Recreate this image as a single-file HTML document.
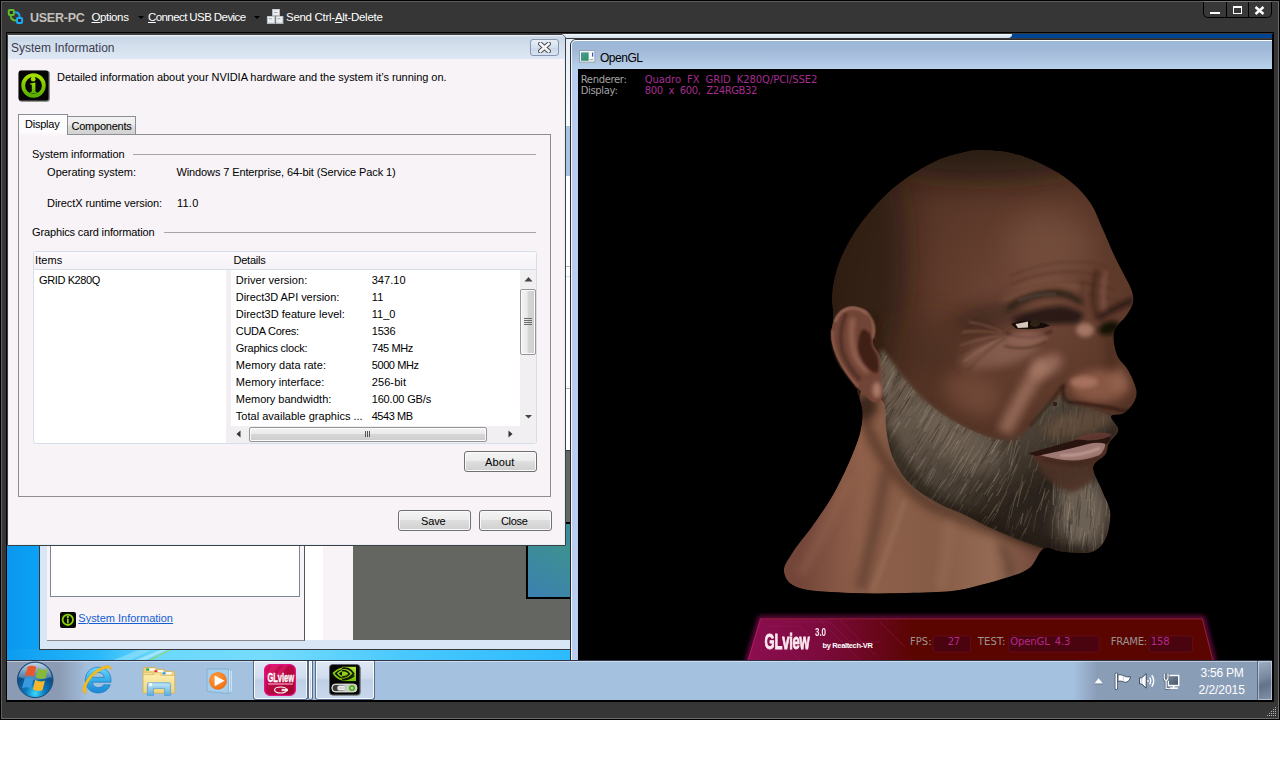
<!DOCTYPE html>
<html>
<head>
<meta charset="utf-8">
<title>USER-PC</title>
<style>
*{box-sizing:border-box;margin:0;padding:0}
html,body{width:1280px;height:768px;overflow:hidden;background:#fff}
body{font-family:"Liberation Sans",sans-serif;font-size:11px;color:#000;position:relative}
.a{position:absolute}
.t{position:absolute;white-space:nowrap}
u{text-decoration:underline}
#frame{position:absolute;left:0;top:0;width:1280px;height:720px;background:#363636;border:1px solid #000}
#desk{position:absolute;left:7px;top:34px;width:1265px;height:666px;overflow:hidden;background:#1c9cf0}
#in{position:absolute;left:-7px;top:-34px;width:1280px;height:768px}
.btn{position:absolute;border:1px solid #707070;border-radius:3px;background:linear-gradient(#f4f4f4 0,#ececec 46%,#dedede 50%,#d0d0d0 100%);box-shadow:inset 0 0 0 1px #fafafa}
.hr{position:absolute;height:1px;background:#a5a5a5}
</style>
</head>
<body>
<div id="frame"></div>
<div class="a" style="left:1px;top:1px;width:1278px;height:1px;background:#5e5e5e"></div><div class="a" style="left:1px;top:1px;width:1px;height:717px;background:#5e5e5e"></div><div class="a" style="left:1278px;top:1px;width:1px;height:718px;background:#6a6a6a"></div><div class="a" style="left:1px;top:718px;width:1278px;height:1px;background:#6a6a6a"></div><div class="a" style="left:6px;top:32px;width:1268px;height:670px;background:#000"></div><div class="a" style="left:7px;top:33px;width:1266px;height:1px;background:#3a3a3a"></div><svg class="a" style="left:6px;top:7px" width="20" height="20" viewBox="0 0 20 20">
<path d="M9 5.2 Q13.6 5.2 13.6 10" stroke="#18a4f0" stroke-width="2" fill="none"/>
<path d="M4.6 9 Q5.4 13.6 10 13.6" stroke="#5cb82c" stroke-width="2" fill="none"/>
<rect x="2.8" y="2.9" width="5.1" height="5.1" rx="1" fill="#2c2c2c" stroke="#62bc2c" stroke-width="2"/>
<rect x="11" y="10.9" width="5.1" height="5.1" rx="1" fill="#3a2c28" stroke="#18acf8" stroke-width="2"/>
</svg><span class="t" style="left:30.00px;top:10.07px;font-size:12.5px;line-height:16px;color:#c4c0bc;letter-spacing:-0.252px;font-weight:bold;">USER-PC</span><span class="t" style="left:91.50px;top:10.02px;font-size:11.5px;line-height:15px;color:#fff;letter-spacing:-0.377px;"><u>O</u>ptions</span><div class="a" style="left:138px;top:16px;width:0;height:0;border-left:3px solid transparent;border-right:3px solid transparent;border-top:3px solid #000"></div><span class="t" style="left:148.00px;top:10.02px;font-size:11.5px;line-height:15px;color:#fff;letter-spacing:-0.585px;"><u>C</u>onnect USB Device</span><div class="a" style="left:254px;top:16px;width:0;height:0;border-left:3px solid transparent;border-right:3px solid transparent;border-top:3px solid #000"></div><svg class="a" style="left:266px;top:8px" width="18" height="17" viewBox="0 0 18 17">
<rect x="6" y="1" width="8" height="7" fill="#b4b8bc"/><rect x="7" y="1.6" width="6" height="5.4" fill="#eceef0"/>
<rect x="0.9" y="8" width="8.4" height="8" fill="#b4b8bc"/><rect x="1.9" y="8.7" width="6.4" height="6" fill="#eceef0"/>
<rect x="9.6" y="8" width="7.8" height="8" fill="#b4b8bc"/><rect x="10.4" y="8.7" width="6" height="6" fill="#eceef0"/>
<rect x="8" y="4" width="3.4" height="1" fill="#a0a8b4"/><rect x="3" y="10.2" width="3" height="1" fill="#a0a8b4"/><rect x="11.4" y="10.2" width="3" height="1" fill="#a0a8b4"/>
</svg><span class="t" style="left:286.00px;top:10.02px;font-size:11.5px;line-height:15px;color:#fff;letter-spacing:-0.289px;">Send Ctrl-<u>A</u>lt-Delete</span><div class="a" style="left:1203px;top:2px;width:69px;height:16px;border:1px solid #000;border-top:none;border-radius:0 0 5px 5px;background:#383838"></div><div class="a" style="left:1203px;top:1px;width:69px;height:1px;background:#747474"></div>
<div class="a" style="left:1226px;top:2px;width:1px;height:15px;background:#000"></div>
<div class="a" style="left:1248px;top:2px;width:1px;height:15px;background:#000"></div>
<div class="a" style="left:1210px;top:12px;width:10px;height:2px;background:#fff"></div>
<div class="a" style="left:1233px;top:6px;width:9px;height:8px;border:1px solid #fff;border-top-width:2px"></div>
<svg class="a" style="left:1254px;top:6px" width="11" height="9" viewBox="0 0 11 9"><path d="M1.5 1 L9.5 8 M9.5 1 L1.5 8" stroke="#fff" stroke-width="2.4"/></svg>
<div id="desk"><div id="in">
<div class="a" style="left:7px;top:34px;width:1265px;height:666px;background:linear-gradient(90deg,#0a98ee 0,#0ca4f6 40px,#48c8fa 150px,#2cbcfc 300px,#1eb0fc 560px,#1ca8f6 100%)"></div><div class="a" style="left:7px;top:34px;width:1265px;height:5px;background:#004494"></div><div class="a" style="left:7px;top:649px;width:565px;height:12px;background:linear-gradient(90deg,#0c9cf0 0,#28b8fa 90px,#6cd8fe 150px,#74dcff 260px,#48c8ff 400px,#2cbaff 565px)"></div><svg class="a" style="left:111px;top:649px" width="120" height="12" viewBox="0 0 120 12"><path d="M0 12 L30 0 L42 0 L18 12 Z" fill="#9fe4fb" opacity=".55"/><path d="M22 12 L52 0 L58 0 L32 12 Z" fill="#c8f0fc" opacity=".6"/><path d="M36 12 L60 0 L62 0 L39 12 Z" fill="#98d838" opacity=".8"/></svg><div class="a" style="left:558px;top:34px;width:454px;height:4px;background:linear-gradient(#f4f8fc,#cfdcea);border-radius:0 0 5px 0"></div><div class="a" style="left:566px;top:38px;width:706px;height:1px;background:#3a3a3a"></div><div class="a" style="left:566px;top:39px;width:14px;height:10px;background:#e6eef8"></div><div class="a" style="left:39px;top:60px;width:540px;height:590px;background:#d9e6f5;border:1px solid #38383c"></div><div class="a" style="left:566px;top:39px;width:5px;height:506px;background:#fff"></div><div class="a" style="left:566px;top:39px;width:5px;height:86px;background:linear-gradient(#e6eef8,#f8fafc)"></div><div class="a" style="left:566px;top:126px;width:4px;height:50px;background:#a9c3e2"></div><div class="a" style="left:566px;top:266px;width:5px;height:1px;background:#b0b0b0"></div><div class="a" style="left:566px;top:276px;width:5px;height:1px;background:#d0dcec"></div><div class="a" style="left:566px;top:388px;width:5px;height:1px;background:#b0b0b0"></div><div class="a" style="left:566px;top:451px;width:5px;height:94px;background:#646662"></div><div class="a" style="left:566px;top:450px;width:5px;height:1px;background:#333"></div><div class="a" style="left:566px;top:524px;width:5px;height:21px;background:#3c8c98"></div><div class="a" style="left:566px;top:522px;width:5px;height:2px;background:#000"></div><div class="a" style="left:47px;top:540px;width:258px;height:101px;background:#f7f3f7;border-right:1px solid #55555a;border-bottom:1px solid #8a8a90"></div><div class="a" style="left:50px;top:540px;width:250px;height:57px;background:#fff;border:1px solid #7e8596;border-top:none"></div><svg class="a" style="left:60px;top:612px" width="16" height="16" viewBox="0 0 16 16">
<rect x="0" y="0" width="16" height="16" rx="2" fill="#0a0a0a"/>
<circle cx="7.8" cy="7.8" r="5.2" fill="none" stroke="#8cd400" stroke-width="1.8"/>
<circle cx="7.8" cy="4.9" r="1.1" fill="#9ee000"/><rect x="7" y="6.6" width="1.7" height="4.8" fill="#8cd400"/></svg><span class="t" style="left:78.30px;top:610.69px;font-size:11px;line-height:14px;color:#1560d0;letter-spacing:-0.004px;text-decoration:underline;">System Information</span><div class="a" style="left:305px;top:545px;width:18px;height:95px;background:#fff"></div><div class="a" style="left:323px;top:545px;width:30px;height:95px;background:#f7f3f7"></div><div class="a" style="left:353px;top:545px;width:218px;height:95px;background:#646662"></div><div class="a" style="left:526px;top:545px;width:45px;height:54px;background:linear-gradient(30deg,#3c80b0,#3c9290);border-left:2px solid #000;border-bottom:2px solid #000"></div>
<div class="a" style="left:570px;top:39px;width:720px;height:640px;border:1px solid #2c2c30;border-radius:6px 0 0 0;background:linear-gradient(#9ab6d6 0,#a3bad9 12px,#b7d0ea 28px,#b9cdf0 29px,#b9cdf0 100%)"></div><div class="a" style="left:571px;top:40px;width:720px;height:640px;border-top:1px solid #fff;border-left:1px solid #eef4fb;border-radius:5px 0 0 0"></div><svg class="a" style="left:579px;top:50px" width="17" height="13" viewBox="0 0 17 13">
<defs><linearGradient id="oi" x1="0" y1="0" x2="1" y2="1"><stop offset="0" stop-color="#4c9ca0"/><stop offset="1" stop-color="#2c9060"/></linearGradient></defs>
<rect x=".5" y=".5" width="15.4" height="11.6" fill="#f4f6f8" stroke="#9aa4b0" stroke-width="1"/>
<rect x="2" y="2.4" width="7.6" height="8.4" fill="url(#oi)"/>
<rect x="13" y="2.6" width="1.2" height="4" fill="#2858c0"/><rect x="10.6" y="9" width="3.6" height="1.2" fill="#a8b0b8"/>
</svg><span class="t" style="left:600.00px;top:50.14px;font-size:12px;line-height:16px;color:#000;letter-spacing:-0.479px;">OpenGL</span><div class="a" style="left:578px;top:69px;width:700px;height:600px;background:#000"></div><span class="t" style="left:580.70px;top:72.83px;font-size:10px;line-height:13px;color:#a4a4a4;letter-spacing:-0.338px;font-family:&quot;DejaVu Sans&quot;,&quot;Liberation Sans&quot;,sans-serif;">Renderer:</span><span class="t" style="left:580.70px;top:83.94px;font-size:10px;line-height:13px;color:#a4a4a4;letter-spacing:-0.339px;font-family:&quot;DejaVu Sans&quot;,&quot;Liberation Sans&quot;,sans-serif;">Display:</span><span class="t" style="left:644.70px;top:72.83px;font-size:10px;line-height:13px;color:#a62c90;letter-spacing:-0.075px;font-family:&quot;DejaVu Sans&quot;,&quot;Liberation Sans&quot;,sans-serif;word-spacing:3px;">Quadro FX GRID K280Q/PCI/SSE2</span><span class="t" style="left:644.70px;top:83.94px;font-size:10px;line-height:13px;color:#a62c90;letter-spacing:-0.388px;font-family:&quot;DejaVu Sans&quot;,&quot;Liberation Sans&quot;,sans-serif;word-spacing:3px;">800 x 600, Z24RGB32</span><svg class="a" style="left:770px;top:140px" width="380" height="460" viewBox="770 140 380 460"><defs>
<clipPath id="hc"><path d="M980.0 150.2 C988.4 150.3 1001.7 150.8 1012.5 153.4 C1023.3 156.0 1035.2 161.0 1045.0 165.8 C1054.8 170.6 1063.4 175.8 1071.0 182.0 C1078.6 188.2 1085.4 195.6 1090.6 203.2 C1095.8 210.8 1098.2 219.2 1102.0 227.6 C1105.8 236.0 1109.9 246.1 1113.4 253.7 C1116.9 261.3 1120.2 267.2 1123.2 273.2 C1126.2 279.2 1129.7 284.6 1131.3 289.5 C1132.9 294.4 1133.8 298.2 1133.0 302.5 C1132.2 306.8 1129.6 310.6 1126.4 315.5 C1123.2 320.4 1115.6 325.3 1114.0 331.8 C1112.4 338.3 1114.4 348.1 1116.7 354.5 C1119.0 360.9 1124.8 364.2 1128.0 370.0 C1131.2 375.8 1135.2 384.2 1136.2 389.5 C1137.2 394.8 1136.0 398.1 1134.0 402.0 C1132.0 405.9 1127.8 410.6 1124.0 413.0 C1120.2 415.4 1112.0 413.6 1111.0 416.5 C1110.0 419.4 1118.6 425.8 1118.3 430.2 C1118.0 434.6 1111.2 439.1 1109.0 443.2 C1106.8 447.3 1108.0 450.5 1105.3 454.6 C1102.6 458.7 1093.5 461.6 1093.0 467.6 C1092.5 473.6 1099.1 482.8 1102.0 490.4 C1104.9 498.0 1109.7 505.1 1110.2 513.2 C1110.8 521.3 1108.6 532.7 1105.3 539.2 C1102.0 545.7 1097.9 550.2 1090.6 552.2 C1083.3 554.2 1069.2 552.1 1061.4 551.5 C1053.6 550.9 1048.9 545.6 1043.5 548.4 C1038.1 551.2 1035.6 563.4 1028.8 568.5 C1022.0 573.6 1011.8 575.8 1002.8 578.8 C993.8 581.8 983.4 584.5 975.0 586.5 C966.6 588.5 963.6 589.9 952.2 591.0 C940.8 592.1 923.5 592.7 906.7 593.0 C889.9 593.3 869.3 593.8 851.4 593.0 C833.5 592.2 810.5 591.5 799.3 588.0 C788.1 584.5 785.1 578.0 784.0 572.0 C782.9 566.0 788.1 559.8 792.8 552.2 C797.5 544.6 805.8 535.4 812.3 526.2 C818.8 517.0 825.8 507.2 831.8 496.9 C837.8 486.6 843.5 474.7 848.1 464.4 C852.7 454.1 857.1 443.7 859.5 435.0 C861.9 426.3 863.0 419.5 862.7 412.3 C862.4 405.1 858.5 395.9 857.5 392.0 C856.5 388.1 858.6 391.7 857.0 389.0 C855.4 386.3 850.7 380.0 848.0 376.0 C845.3 372.0 843.3 369.3 841.0 365.0 C838.7 360.7 835.7 355.0 834.0 350.0 C832.3 345.0 831.2 339.7 831.0 335.0 C830.8 330.3 832.7 326.2 833.0 322.0 C833.3 317.8 833.1 313.7 833.0 310.0 C832.9 306.3 832.1 304.5 832.2 300.0 C832.3 295.5 832.4 289.6 833.7 283.0 C835.0 276.4 837.2 267.8 840.2 260.2 C843.2 252.6 847.0 245.0 851.6 237.4 C856.2 229.8 861.9 221.9 867.9 214.6 C873.9 207.3 880.3 200.0 887.4 193.5 C894.5 187.0 902.1 181.0 910.2 175.6 C918.3 170.2 927.5 164.7 936.2 160.9 C944.9 157.1 954.9 154.6 962.2 152.8 C969.5 151.0 971.6 150.1 980.0 150.2Z"/></clipPath>
<clipPath id="bc"><path d="M881.0 350.0 C882.2 347.2 885.3 353.5 889.0 358.0 C892.7 362.5 897.8 370.7 903.0 377.0 C908.2 383.3 914.2 390.3 920.0 396.0 C925.8 401.7 932.2 406.7 938.0 411.0 C943.8 415.3 949.2 418.7 955.0 422.0 C960.8 425.3 966.8 428.3 973.0 431.0 C979.2 433.7 985.5 436.5 992.0 438.0 C998.5 439.5 1006.3 441.2 1012.0 440.0 C1017.7 438.8 1021.3 435.7 1026.0 431.0 C1030.7 426.3 1035.7 417.2 1040.0 412.0 C1044.3 406.8 1048.3 402.7 1052.0 400.0 C1055.7 397.3 1058.2 395.3 1062.0 396.0 C1065.8 396.7 1069.5 401.7 1075.0 404.0 C1080.5 406.3 1089.0 407.9 1095.0 410.0 C1101.0 412.1 1107.1 413.1 1111.0 416.5 C1114.9 419.9 1118.6 426.1 1118.3 430.2 C1118.0 434.3 1115.4 438.7 1109.0 441.0 C1102.6 443.3 1089.8 442.5 1080.0 444.0 C1070.2 445.5 1058.0 448.7 1050.0 450.0 C1042.0 451.3 1033.7 450.0 1032.0 452.0 C1030.3 454.0 1035.3 459.3 1040.0 462.0 C1044.7 464.7 1051.2 467.1 1060.0 468.0 C1068.8 468.9 1086.0 463.9 1093.0 467.6 C1100.0 471.3 1099.1 482.8 1102.0 490.4 C1104.9 498.0 1109.7 505.1 1110.2 513.2 C1110.8 521.3 1108.6 532.7 1105.3 539.2 C1102.0 545.7 1097.9 550.2 1090.6 552.2 C1083.3 554.2 1069.2 552.1 1061.4 551.5 C1053.6 550.9 1050.4 550.3 1043.5 548.4 C1036.6 546.5 1028.9 543.5 1020.0 540.0 C1011.1 536.5 999.1 531.8 990.0 527.6 C980.9 523.4 973.4 518.8 965.3 515.0 C957.2 511.2 948.9 508.6 941.4 504.8 C933.9 501.0 926.0 496.4 920.0 492.0 C914.0 487.6 909.8 483.7 905.6 478.7 C901.4 473.7 897.7 467.4 895.0 462.0 C892.3 456.6 890.8 452.4 889.3 446.2 C887.8 440.0 886.8 432.1 886.0 425.0 C885.2 417.9 885.1 412.2 884.4 403.9 C883.7 395.6 882.6 384.0 882.0 375.0 C881.4 366.0 879.8 352.8 881.0 350.0Z"/></clipPath>
<radialGradient id="hs" gradientUnits="userSpaceOnUse" cx="1030" cy="300" r="230"><stop offset="0" stop-color="#70483a"/><stop offset=".4" stop-color="#5e3a2b"/><stop offset=".75" stop-color="#4e3022"/><stop offset="1" stop-color="#362016"/></radialGradient>
<linearGradient id="ng" gradientUnits="userSpaceOnUse" x1="800" y1="0" x2="1040" y2="0"><stop offset="0" stop-color="#74463a"/><stop offset=".25" stop-color="#8e604a"/><stop offset=".55" stop-color="#865c46"/><stop offset=".8" stop-color="#946a54"/><stop offset="1" stop-color="#70483a"/></linearGradient>
<linearGradient id="bg" gradientUnits="userSpaceOnUse" x1="900" y1="380" x2="980" y2="520"><stop offset="0" stop-color="#685a4c"/><stop offset=".35" stop-color="#5e5246"/><stop offset=".7" stop-color="#4a4036"/><stop offset="1" stop-color="#2c241c"/></linearGradient>
<filter id="b2" filterUnits="userSpaceOnUse" x="740" y="110" width="440" height="520"><feGaussianBlur stdDeviation="2"/></filter>
<filter id="b4" filterUnits="userSpaceOnUse" x="740" y="110" width="440" height="520"><feGaussianBlur stdDeviation="4"/></filter>
<filter id="b8" filterUnits="userSpaceOnUse" x="740" y="110" width="440" height="520"><feGaussianBlur stdDeviation="8"/></filter>
<filter id="b14" filterUnits="userSpaceOnUse" x="740" y="110" width="440" height="520"><feGaussianBlur stdDeviation="14"/></filter>
<filter id="b1" filterUnits="userSpaceOnUse" x="740" y="110" width="440" height="520"><feGaussianBlur stdDeviation="0.9"/></filter>
</defs><g clip-path="url(#hc)"><rect x="770" y="140" width="380" height="460" fill="url(#hs)"/><ellipse cx="846" cy="260" rx="62" ry="150" fill="#22140c" opacity=".6" filter="url(#b14)"/><ellipse cx="985" cy="146" rx="125" ry="34" fill="#1e120a" opacity=".7" filter="url(#b14)"/><ellipse cx="1050" cy="245" rx="42" ry="34" fill="#845c48" opacity=".45" filter="url(#b14)"/><ellipse cx="990" cy="316" rx="40" ry="12" fill="#241610" opacity=".45" filter="url(#b8)" transform="rotate(-12 990 316)"/><path d="M884.4 403.9 C887.7 410.1 885.2 417.9 886.0 425.0 C886.8 432.1 887.8 440.0 889.3 446.2 C890.8 452.4 892.3 456.6 895.0 462.0 C897.7 467.4 901.4 473.7 905.6 478.7 C909.8 483.7 914.0 487.6 920.0 492.0 C926.0 496.4 933.9 501.0 941.4 504.8 C948.9 508.6 957.2 511.2 965.3 515.0 C973.4 518.8 980.9 523.4 990.0 527.6 C999.1 531.8 1011.1 536.5 1020.0 540.0 C1028.9 543.5 1042.0 543.6 1043.5 548.4 C1045.0 553.1 1035.6 563.4 1028.8 568.5 C1022.0 573.6 1011.8 575.8 1002.8 578.8 C993.8 581.8 983.4 584.5 975.0 586.5 C966.6 588.5 963.6 589.9 952.2 591.0 C940.8 592.1 923.5 592.7 906.7 593.0 C889.9 593.3 869.3 593.8 851.4 593.0 C833.5 592.2 810.5 591.5 799.3 588.0 C788.1 584.5 785.1 578.0 784.0 572.0 C782.9 566.0 788.1 559.8 792.8 552.2 C797.5 544.6 805.8 535.4 812.3 526.2 C818.8 517.0 825.8 507.2 831.8 496.9 C837.8 486.6 843.5 474.7 848.1 464.4 C852.7 454.1 857.1 443.7 859.5 435.0 C861.9 426.3 862.6 418.6 862.7 412.3 C862.8 406.0 859.5 401.1 860.0 397.0 C860.5 392.9 861.9 386.9 866.0 388.0 C870.1 389.1 881.1 397.7 884.4 403.9Z" fill="url(#ng)"/><path d="M862 412 Q880 470 930 505 Q980 528 1043 548" fill="none" stroke="#3a2418" stroke-width="10" opacity=".55" filter="url(#b4)"/><path d="M886 470 Q878 520 860 590" fill="none" stroke="#56382a" stroke-width="12" opacity=".6" filter="url(#b4)"/><path d="M905 500 Q890 545 872 592" fill="none" stroke="#a07860" stroke-width="5" opacity=".45" filter="url(#b2)"/><path d="M950 520 Q948 555 940 590" fill="none" stroke="#a07a62" stroke-width="7" opacity=".4" filter="url(#b4)"/><path d="M800 575 Q815 550 850 480" fill="none" stroke="#9a6c54" stroke-width="8" opacity=".4" filter="url(#b4)"/><path d="M1000 545 Q1012 560 1010 578" fill="none" stroke="#4a3024" stroke-width="8" opacity=".5" filter="url(#b4)"/><ellipse cx="866" cy="406" rx="12" ry="13" fill="#26140c" opacity=".75" filter="url(#b4)"/><ellipse cx="1000" cy="352" rx="42" ry="14" fill="#9a7060" opacity=".6" filter="url(#b4)" transform="rotate(-14 1000 352)"/><path d="M1044 362 Q1024 392 1004 432" fill="none" stroke="#a87a68" stroke-width="15" opacity=".7" filter="url(#b4)"/><ellipse cx="1046" cy="366" rx="18" ry="10" fill="#ac7e6c" opacity=".65" filter="url(#b4)" transform="rotate(-30 1046 366)"/><ellipse cx="972" cy="392" rx="30" ry="20" fill="#8a5c4a" opacity=".45" filter="url(#b8)" transform="rotate(30 972 392)"/><ellipse cx="930" cy="350" rx="40" ry="30" fill="#452a1e" opacity=".5" filter="url(#b14)"/><path d="M1003.3 331.0 Q988.6 322.0 973.9 319.0" fill="none" stroke="#3a2218" stroke-width="1.3" opacity=".4" filter="url(#b1)"/><path d="M1002.7 331.8 Q985.9 324.0 969.1 322.2" fill="none" stroke="#b48e7c" stroke-width="1.3" opacity=".4" filter="url(#b1)"/><path d="M1002.2 332.8 Q983.6 326.6 965.0 326.5" fill="none" stroke="#3a2218" stroke-width="1.3" opacity=".4" filter="url(#b1)"/><path d="M1002.0 333.7 Q982.0 329.8 962.1 332.0" fill="none" stroke="#b48e7c" stroke-width="1.3" opacity=".4" filter="url(#b1)"/><path d="M1002.1 334.6 Q981.2 333.5 960.3 338.4" fill="none" stroke="#3a2218" stroke-width="1.3" opacity=".4" filter="url(#b1)"/><path d="M1002.3 335.6 Q981.1 337.6 959.8 345.6" fill="none" stroke="#b48e7c" stroke-width="1.3" opacity=".4" filter="url(#b1)"/><path d="M1002.9 336.4 Q981.9 342.0 960.8 353.5" fill="none" stroke="#3a2218" stroke-width="1.3" opacity=".4" filter="url(#b1)"/><path d="M1003.6 337.3 Q983.5 346.5 963.4 361.8" fill="none" stroke="#b48e7c" stroke-width="1.3" opacity=".4" filter="url(#b1)"/><path d="M1004.6 338.0 Q986.0 351.1 967.4 370.1" fill="none" stroke="#3a2218" stroke-width="1.3" opacity=".4" filter="url(#b1)"/><path d="M1010.0 276.0 Q1060.0 254.0 1108.0 266.0" fill="none" stroke="#4a2e22" stroke-width="1.6" opacity=".4" filter="url(#b1)"/><path d="M1010.0 285.0 Q1060.0 263.0 1112.0 278.0" fill="none" stroke="#4a2e22" stroke-width="1.6" opacity=".4" filter="url(#b1)"/><path d="M1010.0 294.0 Q1060.0 272.0 1116.0 290.0" fill="none" stroke="#4a2e22" stroke-width="1.6" opacity=".4" filter="url(#b1)"/><path d="M1010.0 303.0 Q1060.0 281.0 1120.0 302.0" fill="none" stroke="#4a2e22" stroke-width="1.6" opacity=".4" filter="url(#b1)"/></g><path d="M849.0 306.5 C852.3 305.9 856.7 306.4 860.0 307.5 C863.3 308.6 866.4 309.6 869.0 313.0 C871.6 316.4 874.8 323.0 875.5 328.0 C876.2 333.0 872.4 338.7 873.0 343.0 C873.6 347.3 877.3 350.2 879.0 354.0 C880.7 357.8 882.2 361.0 883.0 366.0 C883.8 371.0 884.3 378.3 884.0 384.0 C883.7 389.7 882.8 397.0 881.0 400.0 C879.2 403.0 875.8 403.0 873.0 402.0 C870.2 401.0 866.7 396.5 864.0 394.0 C861.3 391.5 859.7 390.0 857.0 387.0 C854.3 384.0 850.7 379.7 848.0 376.0 C845.3 372.3 843.3 369.3 841.0 365.0 C838.7 360.7 835.7 355.0 834.0 350.0 C832.3 345.0 831.0 340.0 831.0 335.0 C831.0 330.0 832.5 324.0 834.0 320.0 C835.5 316.0 837.5 313.2 840.0 311.0 C842.5 308.8 845.7 307.1 849.0 306.5Z" fill="#704436"/><path d="M846 313 Q838 330 842 350 Q848 368 860 380" fill="none" stroke="#4a2a20" stroke-width="4" opacity=".7" filter="url(#b1)"/><path d="M853 318 Q849 338 855 356 Q860 366 868 372" fill="none" stroke="#a06e5c" stroke-width="5" opacity=".75" filter="url(#b2)"/><path d="M862.0 330.0 C864.0 328.0 868.3 331.3 870.0 334.0 C871.7 336.7 870.7 342.0 872.0 346.0 C873.3 350.0 877.0 353.7 878.0 358.0 C879.0 362.3 879.3 370.0 878.0 372.0 C876.7 374.0 872.7 372.0 870.0 370.0 C867.3 368.0 864.0 364.0 862.0 360.0 C860.0 356.0 858.0 351.0 858.0 346.0 C858.0 341.0 860.0 332.0 862.0 330.0Z" fill="#34180f" opacity=".8" filter="url(#b1)"/><path d="M835 322 Q840 309 852 308 Q866 309 872 320 Q875 328 873 338" fill="none" stroke="#a87866" stroke-width="2.2" opacity=".8" filter="url(#b1)"/><path d="M832.5 330 Q832 350 842 366 Q850 378 858 387" fill="none" stroke="#94604e" stroke-width="2.4" opacity=".8" filter="url(#b1)"/><ellipse cx="877" cy="390" rx="4.5" ry="8" fill="#b88472" opacity=".85" filter="url(#b2)"/><path d="M869 312 Q880 322 878 340 Q884 352 886 364" fill="none" stroke="#2c1810" stroke-width="3" opacity=".6" filter="url(#b2)"/><g clip-path="url(#hc)"><path d="M881.0 350.0 C882.2 347.2 885.3 353.5 889.0 358.0 C892.7 362.5 897.8 370.7 903.0 377.0 C908.2 383.3 914.2 390.3 920.0 396.0 C925.8 401.7 932.2 406.7 938.0 411.0 C943.8 415.3 949.2 418.7 955.0 422.0 C960.8 425.3 966.8 428.3 973.0 431.0 C979.2 433.7 985.5 436.5 992.0 438.0 C998.5 439.5 1006.3 441.2 1012.0 440.0 C1017.7 438.8 1021.3 435.7 1026.0 431.0 C1030.7 426.3 1035.7 417.2 1040.0 412.0 C1044.3 406.8 1048.3 402.7 1052.0 400.0 C1055.7 397.3 1058.2 395.3 1062.0 396.0 C1065.8 396.7 1069.5 401.7 1075.0 404.0 C1080.5 406.3 1089.0 407.9 1095.0 410.0 C1101.0 412.1 1107.1 413.1 1111.0 416.5 C1114.9 419.9 1118.6 426.1 1118.3 430.2 C1118.0 434.3 1115.4 438.7 1109.0 441.0 C1102.6 443.3 1089.8 442.5 1080.0 444.0 C1070.2 445.5 1058.0 448.7 1050.0 450.0 C1042.0 451.3 1033.7 450.0 1032.0 452.0 C1030.3 454.0 1035.3 459.3 1040.0 462.0 C1044.7 464.7 1051.2 467.1 1060.0 468.0 C1068.8 468.9 1086.0 463.9 1093.0 467.6 C1100.0 471.3 1099.1 482.8 1102.0 490.4 C1104.9 498.0 1109.7 505.1 1110.2 513.2 C1110.8 521.3 1108.6 532.7 1105.3 539.2 C1102.0 545.7 1097.9 550.2 1090.6 552.2 C1083.3 554.2 1069.2 552.1 1061.4 551.5 C1053.6 550.9 1050.4 550.3 1043.5 548.4 C1036.6 546.5 1028.9 543.5 1020.0 540.0 C1011.1 536.5 999.1 531.8 990.0 527.6 C980.9 523.4 973.4 518.8 965.3 515.0 C957.2 511.2 948.9 508.6 941.4 504.8 C933.9 501.0 926.0 496.4 920.0 492.0 C914.0 487.6 909.8 483.7 905.6 478.7 C901.4 473.7 897.7 467.4 895.0 462.0 C892.3 456.6 890.8 452.4 889.3 446.2 C887.8 440.0 886.8 432.1 886.0 425.0 C885.2 417.9 885.1 412.2 884.4 403.9 C883.7 395.6 882.6 384.0 882.0 375.0 C881.4 366.0 879.8 352.8 881.0 350.0Z" fill="url(#bg)" filter="url(#b2)"/><g clip-path="url(#bc)"><ellipse cx="1082" cy="512" rx="26" ry="40" fill="#9a8c7c" opacity=".6" filter="url(#b8)"/><ellipse cx="1078" cy="424" rx="36" ry="12" fill="#6c5240" opacity=".7" filter="url(#b4)" transform="rotate(-12 1078 424)"/><ellipse cx="960" cy="440" rx="50" ry="22" fill="#7e7060" opacity=".45" filter="url(#b8)" transform="rotate(35 960 440)"/><path d="M956 380l-13.1 17.3" stroke="#8a7c6a" stroke-width="0.9" opacity="0.24"/><path d="M999 358l-10.8 14.2" stroke="#8a7c6a" stroke-width="1.0" opacity="0.24"/><path d="M1012 541l-5.7 20.6" stroke="#9a8c7a" stroke-width="1.0" opacity="0.32"/><path d="M1108 359l-1.9 17.7" stroke="#4a3a2e" stroke-width="1.0" opacity="0.37"/><path d="M1040 371l-5.5 13.1" stroke="#4a3a2e" stroke-width="1.0" opacity="0.38"/><path d="M996 457l-12.9 20.3" stroke="#3a2e24" stroke-width="0.9" opacity="0.28"/><path d="M922 508l-6.5 9.5" stroke="#3a2e24" stroke-width="1.2" opacity="0.41"/><path d="M947 548l-6.6 10.2" stroke="#7e6e5e" stroke-width="0.8" opacity="0.35"/><path d="M889 485l-12.3 20.3" stroke="#7e6e5e" stroke-width="0.9" opacity="0.31"/><path d="M996 511l-6.7 9.0" stroke="#2a2018" stroke-width="1.0" opacity="0.39"/><path d="M894 492l-9.5 19.4" stroke="#3a2e24" stroke-width="0.9" opacity="0.32"/><path d="M1036 355l-5.0 11.8" stroke="#574636" stroke-width="0.7" opacity="0.42"/><path d="M910 400l-7.9 15.1" stroke="#8a7c6a" stroke-width="0.8" opacity="0.32"/><path d="M945 378l-9.2 15.2" stroke="#94867a" stroke-width="1.3" opacity="0.40"/><path d="M969 397l-6.8 9.3" stroke="#30251c" stroke-width="0.7" opacity="0.44"/><path d="M923 407l-6.6 10.8" stroke="#7e6e5e" stroke-width="1.3" opacity="0.40"/><path d="M1001 475l-13.5 17.6" stroke="#94867a" stroke-width="0.9" opacity="0.32"/><path d="M993 431l-5.9 12.1" stroke="#3a2e24" stroke-width="0.8" opacity="0.31"/><path d="M892 350l-7.6 10.2" stroke="#7e6e5e" stroke-width="1.1" opacity="0.24"/><path d="M929 426l-9.6 19.2" stroke="#7e6e5e" stroke-width="1.0" opacity="0.25"/><path d="M994 548l-10.5 15.4" stroke="#a89a88" stroke-width="0.8" opacity="0.31"/><path d="M942 517l-7.9 10.2" stroke="#7e6e5e" stroke-width="0.8" opacity="0.36"/><path d="M886 457l-12.8 24.5" stroke="#2a2018" stroke-width="1.0" opacity="0.46"/><path d="M963 395l-10.5 16.8" stroke="#30251c" stroke-width="1.1" opacity="0.42"/><path d="M1057 389l-0.7 10.0" stroke="#3e3026" stroke-width="1.0" opacity="0.31"/><path d="M887 356l-8.6 12.3" stroke="#7e6e5e" stroke-width="1.0" opacity="0.46"/><path d="M1111 543l-2.2 16.4" stroke="#30251c" stroke-width="1.0" opacity="0.31"/><path d="M993 549l-12.9 16.5" stroke="#7e6e5e" stroke-width="1.2" opacity="0.24"/><path d="M1035 534l-5.2 23.5" stroke="#3a2e24" stroke-width="1.2" opacity="0.33"/><path d="M1029 368l-4.3 18.4" stroke="#574636" stroke-width="1.1" opacity="0.24"/><path d="M917 551l-5.4 9.0" stroke="#3a2e24" stroke-width="1.2" opacity="0.26"/><path d="M1073 548l-1.9 21.7" stroke="#a89a88" stroke-width="0.7" opacity="0.43"/><path d="M1050 371l-6.6 15.1" stroke="#3e3026" stroke-width="0.7" opacity="0.28"/><path d="M997 504l-8.3 13.5" stroke="#a89a88" stroke-width="0.7" opacity="0.41"/><path d="M1090 484l-0.7 24.7" stroke="#a89a88" stroke-width="1.0" opacity="0.36"/><path d="M884 439l-8.2 10.5" stroke="#a89a88" stroke-width="0.8" opacity="0.34"/><path d="M1050 462l-4.6 15.2" stroke="#3a2e24" stroke-width="1.2" opacity="0.25"/><path d="M1011 400l-3.1 14.7" stroke="#3a2e24" stroke-width="1.0" opacity="0.42"/><path d="M1094 440l-0.5 14.7" stroke="#7a6a58" stroke-width="1.0" opacity="0.36"/><path d="M992 540l-10.4 20.0" stroke="#2a2018" stroke-width="1.3" opacity="0.45"/><path d="M927 440l-9.6 14.6" stroke="#7e6e5e" stroke-width="0.7" opacity="0.28"/><path d="M897 485l-11.0 21.4" stroke="#a89a88" stroke-width="1.3" opacity="0.39"/><path d="M966 401l-6.7 10.5" stroke="#8a7c6a" stroke-width="0.9" opacity="0.35"/><path d="M1112 518l-0.8 12.9" stroke="#94867a" stroke-width="0.9" opacity="0.27"/><path d="M955 496l-5.4 8.8" stroke="#3a2e24" stroke-width="1.1" opacity="0.32"/><path d="M1001 410l-16.3 21.9" stroke="#30251c" stroke-width="1.3" opacity="0.25"/><path d="M942 358l-13.7 19.7" stroke="#a89a88" stroke-width="1.2" opacity="0.44"/><path d="M1038 541l-4.9 16.6" stroke="#3a2e24" stroke-width="1.1" opacity="0.24"/><path d="M893 489l-10.7 14.1" stroke="#9a8c7a" stroke-width="1.1" opacity="0.43"/><path d="M900 523l-5.2 9.9" stroke="#3a2e24" stroke-width="0.7" opacity="0.48"/><path d="M978 535l-12.9 16.8" stroke="#30251c" stroke-width="1.3" opacity="0.47"/><path d="M941 387l-13.6 23.1" stroke="#30251c" stroke-width="0.9" opacity="0.35"/><path d="M922 420l-5.9 8.5" stroke="#9a8c7a" stroke-width="0.7" opacity="0.35"/><path d="M1109 454l-0.8 14.4" stroke="#94867a" stroke-width="1.1" opacity="0.36"/><path d="M1088 546l-2.1 15.4" stroke="#30251c" stroke-width="0.9" opacity="0.44"/><path d="M1045 478l-5.8 16.3" stroke="#9a8c7a" stroke-width="1.2" opacity="0.22"/><path d="M1026 528l-7.5 16.1" stroke="#94867a" stroke-width="1.2" opacity="0.39"/><path d="M946 399l-8.2 12.9" stroke="#a89a88" stroke-width="0.9" opacity="0.22"/><path d="M965 416l-15.6 23.0" stroke="#9a8c7a" stroke-width="1.3" opacity="0.30"/><path d="M963 350l-9.0 14.3" stroke="#30251c" stroke-width="0.8" opacity="0.42"/><path d="M901 515l-6.5 10.8" stroke="#94867a" stroke-width="0.7" opacity="0.30"/><path d="M934 468l-9.5 17.1" stroke="#94867a" stroke-width="1.2" opacity="0.41"/><path d="M996 407l-12.5 17.0" stroke="#94867a" stroke-width="1.1" opacity="0.43"/><path d="M913 456l-9.0 16.8" stroke="#9a8c7a" stroke-width="1.2" opacity="0.37"/><path d="M1089 488l-2.9 22.3" stroke="#9a8c7a" stroke-width="0.7" opacity="0.39"/><path d="M1105 426l-2.4 12.5" stroke="#3e3026" stroke-width="1.0" opacity="0.22"/><path d="M1067 501l-0.4 19.0" stroke="#8a7c6a" stroke-width="1.1" opacity="0.34"/><path d="M1069 521l0.8 14.2" stroke="#30251c" stroke-width="1.1" opacity="0.47"/><path d="M996 427l-9.3 16.2" stroke="#9a8c7a" stroke-width="1.1" opacity="0.39"/><path d="M898 380l-7.1 12.7" stroke="#2a2018" stroke-width="1.1" opacity="0.25"/><path d="M993 448l-16.5 22.0" stroke="#30251c" stroke-width="1.1" opacity="0.30"/><path d="M1001 444l-11.0 14.8" stroke="#30251c" stroke-width="0.9" opacity="0.24"/><path d="M991 408l-6.0 9.7" stroke="#3a2e24" stroke-width="1.3" opacity="0.32"/><path d="M1094 538l-2.0 11.2" stroke="#2a2018" stroke-width="1.3" opacity="0.25"/><path d="M1072 453l0.9 25.9" stroke="#30251c" stroke-width="1.0" opacity="0.45"/><path d="M972 382l-13.5 23.5" stroke="#94867a" stroke-width="0.9" opacity="0.26"/><path d="M960 414l-15.5 19.8" stroke="#7e6e5e" stroke-width="1.2" opacity="0.25"/><path d="M1097 494l-2.8 26.1" stroke="#7e6e5e" stroke-width="0.7" opacity="0.32"/><path d="M1084 365l1.0 18.6" stroke="#7a6a58" stroke-width="0.8" opacity="0.44"/><path d="M947 539l-8.3 11.9" stroke="#7e6e5e" stroke-width="0.8" opacity="0.32"/><path d="M1104 529l0.3 24.6" stroke="#30251c" stroke-width="1.1" opacity="0.23"/><path d="M1051 441l0.3 16.5" stroke="#574636" stroke-width="0.7" opacity="0.46"/><path d="M910 445l-9.2 13.4" stroke="#2a2018" stroke-width="0.9" opacity="0.28"/><path d="M993 485l-6.1 10.5" stroke="#8a7c6a" stroke-width="0.8" opacity="0.46"/><path d="M996 394l-11.6 23.6" stroke="#3a2e24" stroke-width="1.0" opacity="0.36"/><path d="M937 385l-11.2 16.6" stroke="#7e6e5e" stroke-width="0.9" opacity="0.37"/><path d="M1088 501l-1.1 17.4" stroke="#30251c" stroke-width="0.9" opacity="0.31"/><path d="M895 406l-16.3 22.0" stroke="#30251c" stroke-width="0.8" opacity="0.45"/><path d="M970 480l-10.0 14.7" stroke="#9a8c7a" stroke-width="0.8" opacity="0.33"/><path d="M1059 512l-1.1 27.4" stroke="#8a7c6a" stroke-width="0.9" opacity="0.46"/><path d="M1073 523l-3.4 27.3" stroke="#8a7c6a" stroke-width="0.8" opacity="0.26"/><path d="M1107 372l0.6 17.4" stroke="#4a3a2e" stroke-width="1.0" opacity="0.23"/><path d="M1063 397l0.3 18.6" stroke="#3e3026" stroke-width="1.1" opacity="0.36"/><path d="M982 504l-6.7 9.7" stroke="#30251c" stroke-width="0.9" opacity="0.28"/><path d="M1021 352l-4.7 14.7" stroke="#7e6e5e" stroke-width="1.1" opacity="0.45"/><path d="M991 397l-6.4 12.9" stroke="#2a2018" stroke-width="0.7" opacity="0.27"/><path d="M1087 481l-1.5 11.4" stroke="#94867a" stroke-width="1.3" opacity="0.28"/><path d="M888 418l-8.7 15.2" stroke="#30251c" stroke-width="0.7" opacity="0.30"/><path d="M1078 364l-1.8 13.1" stroke="#3e3026" stroke-width="1.0" opacity="0.29"/><path d="M1088 372l0.1 14.9" stroke="#574636" stroke-width="1.0" opacity="0.39"/><path d="M1102 380l-1.6 11.8" stroke="#574636" stroke-width="0.7" opacity="0.24"/><path d="M972 531l-12.6 22.6" stroke="#8a7c6a" stroke-width="1.3" opacity="0.31"/><path d="M923 539l-14.3 18.6" stroke="#94867a" stroke-width="1.2" opacity="0.48"/><path d="M984 372l-6.9 9.1" stroke="#94867a" stroke-width="1.3" opacity="0.25"/><path d="M1106 392l0.9 11.5" stroke="#4a3a2e" stroke-width="0.7" opacity="0.34"/><path d="M967 536l-7.5 11.2" stroke="#3a2e24" stroke-width="0.7" opacity="0.33"/><path d="M1070 505l-2.1 10.5" stroke="#8a7c6a" stroke-width="1.2" opacity="0.24"/><path d="M926 363l-11.6 17.4" stroke="#7e6e5e" stroke-width="1.3" opacity="0.38"/><path d="M941 495l-8.9 12.9" stroke="#9a8c7a" stroke-width="1.1" opacity="0.37"/><path d="M1069 541l0.9 11.1" stroke="#8a7c6a" stroke-width="1.0" opacity="0.47"/><path d="M1103 428l-0.6 10.1" stroke="#3e3026" stroke-width="1.3" opacity="0.27"/><path d="M1068 499l1.5 24.8" stroke="#30251c" stroke-width="0.9" opacity="0.30"/><path d="M965 508l-6.7 9.3" stroke="#a89a88" stroke-width="0.8" opacity="0.24"/><path d="M888 462l-7.0 14.2" stroke="#8a7c6a" stroke-width="1.3" opacity="0.29"/><path d="M900 369l-9.3 16.5" stroke="#3a2e24" stroke-width="0.8" opacity="0.25"/><path d="M988 530l-7.4 12.1" stroke="#8a7c6a" stroke-width="1.2" opacity="0.30"/><path d="M945 404l-8.3 12.0" stroke="#3a2e24" stroke-width="0.8" opacity="0.28"/><path d="M916 529l-11.4 16.9" stroke="#94867a" stroke-width="0.9" opacity="0.28"/><path d="M1003 481l-6.3 10.0" stroke="#9a8c7a" stroke-width="0.8" opacity="0.34"/><path d="M1072 520l-5.1 26.0" stroke="#2a2018" stroke-width="0.8" opacity="0.23"/><path d="M1021 517l-5.6 12.3" stroke="#a89a88" stroke-width="1.0" opacity="0.29"/><path d="M1062 541l-0.0 11.9" stroke="#7e6e5e" stroke-width="0.8" opacity="0.32"/><path d="M913 391l-7.5 12.5" stroke="#30251c" stroke-width="1.2" opacity="0.43"/><path d="M976 425l-12.8 16.9" stroke="#9a8c7a" stroke-width="1.2" opacity="0.36"/><path d="M895 370l-8.9 14.6" stroke="#8a7c6a" stroke-width="1.1" opacity="0.32"/><path d="M943 550l-12.0 18.5" stroke="#9a8c7a" stroke-width="0.9" opacity="0.37"/><path d="M964 434l-11.2 23.0" stroke="#7e6e5e" stroke-width="1.1" opacity="0.32"/><path d="M975 540l-10.5 14.4" stroke="#8a7c6a" stroke-width="1.2" opacity="0.33"/><path d="M1087 443l-1.8 8.9" stroke="#574636" stroke-width="0.8" opacity="0.38"/><path d="M967 452l-7.2 10.4" stroke="#a89a88" stroke-width="1.3" opacity="0.25"/><path d="M995 513l-16.0 22.3" stroke="#a89a88" stroke-width="1.2" opacity="0.23"/><path d="M1094 414l0.2 14.7" stroke="#3e3026" stroke-width="1.1" opacity="0.44"/><path d="M1025 474l-4.1 12.9" stroke="#30251c" stroke-width="0.7" opacity="0.46"/><path d="M917 423l-5.6 11.4" stroke="#30251c" stroke-width="0.7" opacity="0.37"/><path d="M1057 358l-2.9 17.3" stroke="#7a6a58" stroke-width="1.1" opacity="0.30"/><path d="M938 429l-8.8 14.1" stroke="#a89a88" stroke-width="0.7" opacity="0.38"/><path d="M995 398l-11.4 20.8" stroke="#3a2e24" stroke-width="1.2" opacity="0.43"/><path d="M974 364l-9.1 13.7" stroke="#3a2e24" stroke-width="1.0" opacity="0.39"/><path d="M890 376l-15.0 22.0" stroke="#8a7c6a" stroke-width="0.7" opacity="0.35"/><path d="M968 542l-5.8 11.0" stroke="#8a7c6a" stroke-width="0.8" opacity="0.48"/><path d="M995 543l-15.6 21.4" stroke="#30251c" stroke-width="0.7" opacity="0.31"/><path d="M1057 382l-2.1 18.2" stroke="#3e3026" stroke-width="0.9" opacity="0.47"/><path d="M992 470l-12.1 17.2" stroke="#7e6e5e" stroke-width="0.7" opacity="0.27"/><path d="M918 539l-10.2 19.8" stroke="#a89a88" stroke-width="1.2" opacity="0.29"/><path d="M1060 360l2.3 17.7" stroke="#4a3a2e" stroke-width="0.9" opacity="0.36"/><path d="M1080 499l-1.3 16.6" stroke="#7e6e5e" stroke-width="1.0" opacity="0.31"/><path d="M1059 439l0.5 9.2" stroke="#7a6a58" stroke-width="1.2" opacity="0.29"/><path d="M1030 549l-5.0 19.9" stroke="#7e6e5e" stroke-width="1.1" opacity="0.41"/><path d="M932 409l-11.6 17.8" stroke="#7e6e5e" stroke-width="1.2" opacity="0.25"/><path d="M933 482l-6.4 8.2" stroke="#7e6e5e" stroke-width="0.9" opacity="0.36"/><path d="M1005 433l-9.1 12.4" stroke="#7e6e5e" stroke-width="1.1" opacity="0.34"/><path d="M912 539l-8.5 11.6" stroke="#8a7c6a" stroke-width="0.7" opacity="0.26"/><path d="M1036 404l-2.6 17.0" stroke="#7a6a58" stroke-width="1.1" opacity="0.37"/><path d="M1021 455l-7.4 17.4" stroke="#9a8c7a" stroke-width="0.7" opacity="0.36"/><path d="M975 398l-5.3 9.7" stroke="#9a8c7a" stroke-width="1.1" opacity="0.39"/><path d="M926 433l-9.7 16.7" stroke="#94867a" stroke-width="1.2" opacity="0.27"/><path d="M952 411l-5.0 9.7" stroke="#3a2e24" stroke-width="1.1" opacity="0.22"/><path d="M1078 501l0.9 18.4" stroke="#3a2e24" stroke-width="0.8" opacity="0.48"/><path d="M941 480l-5.6 10.9" stroke="#2a2018" stroke-width="1.1" opacity="0.29"/><path d="M1010 438l-12.7 20.6" stroke="#2a2018" stroke-width="0.9" opacity="0.46"/><path d="M1089 367l-2.0 13.2" stroke="#3e3026" stroke-width="1.3" opacity="0.41"/><path d="M956 528l-9.2 13.0" stroke="#3a2e24" stroke-width="1.0" opacity="0.36"/><path d="M881 355l-15.7 22.2" stroke="#2a2018" stroke-width="1.2" opacity="0.32"/><path d="M1017 464l-5.6 11.8" stroke="#8a7c6a" stroke-width="0.8" opacity="0.46"/><path d="M961 379l-6.4 8.3" stroke="#9a8c7a" stroke-width="1.1" opacity="0.41"/><path d="M895 469l-7.8 14.6" stroke="#8a7c6a" stroke-width="1.2" opacity="0.42"/><path d="M1046 428l-3.8 9.3" stroke="#4a3a2e" stroke-width="1.3" opacity="0.46"/><path d="M1056 368l0.2 16.5" stroke="#4a3a2e" stroke-width="0.8" opacity="0.43"/><path d="M1031 409l-4.1 10.5" stroke="#7a6a58" stroke-width="1.3" opacity="0.23"/><path d="M1058 534l0.0 23.8" stroke="#3a2e24" stroke-width="1.2" opacity="0.38"/><path d="M887 433l-8.6 15.7" stroke="#7e6e5e" stroke-width="1.0" opacity="0.23"/><path d="M1012 494l-6.7 24.0" stroke="#2a2018" stroke-width="0.8" opacity="0.22"/><path d="M927 504l-17.0 21.8" stroke="#3a2e24" stroke-width="0.8" opacity="0.40"/><path d="M1073 545l2.6 20.5" stroke="#2a2018" stroke-width="1.0" opacity="0.26"/><path d="M1071 540l-2.1 14.0" stroke="#8a7c6a" stroke-width="1.0" opacity="0.48"/><path d="M1011 371l-6.5 14.5" stroke="#94867a" stroke-width="1.2" opacity="0.41"/><path d="M979 480l-9.4 13.8" stroke="#94867a" stroke-width="1.2" opacity="0.35"/><path d="M969 529l-7.6 12.0" stroke="#9a8c7a" stroke-width="0.9" opacity="0.30"/><path d="M916 520l-10.7 19.2" stroke="#a89a88" stroke-width="1.0" opacity="0.40"/><path d="M940 397l-8.1 13.8" stroke="#30251c" stroke-width="1.0" opacity="0.29"/><path d="M1057 517l0.9 21.1" stroke="#30251c" stroke-width="1.1" opacity="0.38"/><path d="M962 398l-15.6 22.3" stroke="#8a7c6a" stroke-width="0.8" opacity="0.39"/><path d="M926 380l-7.2 10.5" stroke="#2a2018" stroke-width="1.0" opacity="0.27"/><path d="M1029 372l-3.1 9.1" stroke="#4a3a2e" stroke-width="0.9" opacity="0.43"/><path d="M1042 451l-6.5 20.4" stroke="#a89a88" stroke-width="0.9" opacity="0.41"/><path d="M881 399l-12.5 22.0" stroke="#94867a" stroke-width="1.2" opacity="0.39"/><path d="M1033 527l-5.8 20.8" stroke="#30251c" stroke-width="1.1" opacity="0.39"/><path d="M986 413l-12.8 17.1" stroke="#94867a" stroke-width="0.8" opacity="0.32"/><path d="M1047 382l-5.3 16.9" stroke="#574636" stroke-width="1.0" opacity="0.39"/><path d="M1084 531l-3.2 15.6" stroke="#3a2e24" stroke-width="1.2" opacity="0.25"/><path d="M939 394l-10.2 20.5" stroke="#30251c" stroke-width="1.0" opacity="0.25"/><path d="M1014 459l-6.6 21.9" stroke="#7e6e5e" stroke-width="1.0" opacity="0.33"/><path d="M1102 392l-1.1 15.6" stroke="#7a6a58" stroke-width="1.1" opacity="0.29"/><path d="M969 362l-5.2 10.1" stroke="#7e6e5e" stroke-width="1.0" opacity="0.25"/><path d="M951 431l-12.1 24.3" stroke="#94867a" stroke-width="1.0" opacity="0.26"/><path d="M1097 364l-2.4 16.9" stroke="#3e3026" stroke-width="0.9" opacity="0.39"/><path d="M1072 515l-2.0 18.3" stroke="#a89a88" stroke-width="1.2" opacity="0.34"/><path d="M1063 397l0.5 15.9" stroke="#3e3026" stroke-width="1.0" opacity="0.43"/><path d="M1067 422l-1.5 15.2" stroke="#574636" stroke-width="1.1" opacity="0.24"/><path d="M1090 381l-0.8 10.8" stroke="#7a6a58" stroke-width="1.2" opacity="0.26"/><path d="M1075 478l-2.1 10.1" stroke="#8a7c6a" stroke-width="1.1" opacity="0.29"/><path d="M904 379l-6.8 12.5" stroke="#7e6e5e" stroke-width="1.2" opacity="0.27"/><path d="M974 458l-10.4 18.2" stroke="#8a7c6a" stroke-width="1.1" opacity="0.45"/><path d="M1064 519l0.4 13.5" stroke="#8a7c6a" stroke-width="1.1" opacity="0.33"/><path d="M1087 462l-1.9 14.6" stroke="#a89a88" stroke-width="1.0" opacity="0.36"/><path d="M993 533l-13.0 18.5" stroke="#a89a88" stroke-width="1.0" opacity="0.44"/><path d="M882 520l-9.6 15.8" stroke="#2a2018" stroke-width="1.2" opacity="0.32"/><path d="M978 544l-5.7 9.8" stroke="#9a8c7a" stroke-width="0.7" opacity="0.23"/><path d="M1052 552l-4.3 24.2" stroke="#3a2e24" stroke-width="1.0" opacity="0.45"/><path d="M888 495l-11.9 17.6" stroke="#7e6e5e" stroke-width="0.9" opacity="0.42"/><path d="M1010 534l-8.4 12.5" stroke="#2a2018" stroke-width="1.0" opacity="0.43"/><path d="M949 517l-9.1 14.7" stroke="#2a2018" stroke-width="1.2" opacity="0.31"/><path d="M928 449l-7.1 9.8" stroke="#2a2018" stroke-width="0.8" opacity="0.47"/><path d="M900 551l-8.9 14.7" stroke="#94867a" stroke-width="1.0" opacity="0.23"/><path d="M950 351l-6.1 12.0" stroke="#9a8c7a" stroke-width="1.2" opacity="0.46"/><path d="M1023 475l-5.0 20.7" stroke="#8a7c6a" stroke-width="0.8" opacity="0.39"/><path d="M987 504l-6.9 9.6" stroke="#9a8c7a" stroke-width="1.0" opacity="0.25"/><path d="M1098 353l-2.9 17.8" stroke="#7a6a58" stroke-width="1.2" opacity="0.27"/><path d="M888 354l-10.4 17.3" stroke="#9a8c7a" stroke-width="1.0" opacity="0.36"/><path d="M1073 506l0.6 17.6" stroke="#94867a" stroke-width="1.0" opacity="0.22"/><path d="M971 470l-11.9 24.1" stroke="#3a2e24" stroke-width="1.2" opacity="0.36"/><path d="M899 445l-13.2 22.5" stroke="#94867a" stroke-width="0.7" opacity="0.40"/><path d="M908 545l-5.4 10.3" stroke="#a89a88" stroke-width="1.0" opacity="0.29"/><path d="M1013 441l-3.8 23.1" stroke="#7e6e5e" stroke-width="1.2" opacity="0.41"/><path d="M1080 497l0.1 11.5" stroke="#3a2e24" stroke-width="1.0" opacity="0.46"/><path d="M939 545l-14.1 18.1" stroke="#9a8c7a" stroke-width="1.2" opacity="0.40"/><path d="M1025 429l-2.9 10.6" stroke="#4a3a2e" stroke-width="0.9" opacity="0.47"/><path d="M1050 445l1.2 9.0" stroke="#7a6a58" stroke-width="1.3" opacity="0.26"/><path d="M1068 446l-0.9 16.8" stroke="#7a6a58" stroke-width="0.9" opacity="0.24"/><path d="M1108 492l-2.3 24.8" stroke="#9a8c7a" stroke-width="1.2" opacity="0.38"/><path d="M952 437l-14.3 21.7" stroke="#94867a" stroke-width="1.1" opacity="0.45"/><path d="M1069 407l-0.8 7.0" stroke="#3e3026" stroke-width="1.1" opacity="0.43"/><path d="M1088 359l1.3 17.5" stroke="#7a6a58" stroke-width="1.3" opacity="0.43"/><path d="M1008 507l-10.0 16.2" stroke="#3a2e24" stroke-width="1.2" opacity="0.27"/><path d="M1056 538l0.0 14.2" stroke="#94867a" stroke-width="1.0" opacity="0.27"/><path d="M940 502l-13.0 20.5" stroke="#8a7c6a" stroke-width="1.0" opacity="0.31"/><path d="M895 430l-11.1 15.9" stroke="#7e6e5e" stroke-width="1.0" opacity="0.37"/><path d="M924 389l-6.5 11.5" stroke="#7e6e5e" stroke-width="1.0" opacity="0.31"/><path d="M1062 523l1.6 14.3" stroke="#3a2e24" stroke-width="0.9" opacity="0.25"/><path d="M1028 509l-3.4 12.4" stroke="#7e6e5e" stroke-width="0.9" opacity="0.38"/><path d="M902 391l-13.3 22.0" stroke="#30251c" stroke-width="0.9" opacity="0.42"/><path d="M980 541l-11.2 21.0" stroke="#a89a88" stroke-width="0.9" opacity="0.23"/><path d="M927 387l-7.0 9.1" stroke="#7e6e5e" stroke-width="1.2" opacity="0.34"/><path d="M1102 534l-0.0 11.2" stroke="#94867a" stroke-width="1.3" opacity="0.40"/><path d="M901 414l-8.5 11.4" stroke="#94867a" stroke-width="0.8" opacity="0.44"/><path d="M967 397l-13.5 18.6" stroke="#2a2018" stroke-width="1.3" opacity="0.24"/><path d="M1009 356l-15.2 21.8" stroke="#3a2e24" stroke-width="0.7" opacity="0.26"/><path d="M1057 540l-2.3 22.1" stroke="#3a2e24" stroke-width="1.2" opacity="0.25"/><path d="M956 402l-6.5 10.4" stroke="#a89a88" stroke-width="1.0" opacity="0.43"/><path d="M1094 530l2.0 18.3" stroke="#9a8c7a" stroke-width="0.8" opacity="0.44"/><path d="M898 475l-8.1 14.6" stroke="#3a2e24" stroke-width="1.3" opacity="0.46"/><path d="M970 354l-5.0 10.2" stroke="#7e6e5e" stroke-width="1.2" opacity="0.34"/><path d="M1027 379l-4.1 8.9" stroke="#3e3026" stroke-width="1.0" opacity="0.26"/><path d="M978 400l-5.4 8.9" stroke="#2a2018" stroke-width="0.9" opacity="0.26"/><path d="M995 414l-15.7 21.1" stroke="#9a8c7a" stroke-width="1.1" opacity="0.42"/><path d="M1097 463l-4.2 24.7" stroke="#30251c" stroke-width="1.3" opacity="0.33"/><path d="M941 398l-7.8 11.9" stroke="#94867a" stroke-width="1.2" opacity="0.23"/><path d="M1050 409l-8.4 17.4" stroke="#3e3026" stroke-width="1.0" opacity="0.43"/><path d="M1101 408l-2.2 11.3" stroke="#3e3026" stroke-width="0.9" opacity="0.27"/><path d="M1077 455l-2.1 14.0" stroke="#8a7c6a" stroke-width="1.2" opacity="0.45"/><path d="M1051 504l-2.1 13.0" stroke="#30251c" stroke-width="1.0" opacity="0.27"/><path d="M895 498l-8.5 15.1" stroke="#9a8c7a" stroke-width="1.0" opacity="0.31"/><path d="M946 479l-16.2 21.6" stroke="#94867a" stroke-width="1.2" opacity="0.34"/><path d="M1084 404l0.8 9.3" stroke="#4a3a2e" stroke-width="0.8" opacity="0.32"/><path d="M1019 351l-6.0 18.4" stroke="#8a7c6a" stroke-width="0.8" opacity="0.41"/><path d="M1071 525l0.6 15.8" stroke="#94867a" stroke-width="1.0" opacity="0.45"/><path d="M948 372l-12.5 19.5" stroke="#9a8c7a" stroke-width="1.0" opacity="0.36"/><path d="M885 545l-8.2 11.4" stroke="#8a7c6a" stroke-width="0.9" opacity="0.36"/><path d="M1104 354l0.9 18.6" stroke="#4a3a2e" stroke-width="1.2" opacity="0.39"/><path d="M989 398l-10.0 15.0" stroke="#8a7c6a" stroke-width="1.1" opacity="0.23"/><path d="M909 450l-10.8 15.6" stroke="#8a7c6a" stroke-width="0.8" opacity="0.45"/><path d="M1007 396l-7.0 12.2" stroke="#3a2e24" stroke-width="1.1" opacity="0.26"/><path d="M1073 539l-1.1 17.0" stroke="#9a8c7a" stroke-width="0.9" opacity="0.46"/><path d="M1062 418l-0.9 10.0" stroke="#7a6a58" stroke-width="1.2" opacity="0.44"/><path d="M893 455l-12.3 24.3" stroke="#30251c" stroke-width="1.2" opacity="0.39"/><path d="M883 372l-7.5 11.1" stroke="#30251c" stroke-width="1.0" opacity="0.23"/><path d="M913 546l-10.8 21.4" stroke="#9a8c7a" stroke-width="1.2" opacity="0.45"/><path d="M1087 357l-1.8 15.0" stroke="#4a3a2e" stroke-width="1.1" opacity="0.29"/><path d="M1002 438l-15.4 22.3" stroke="#2a2018" stroke-width="0.9" opacity="0.26"/><path d="M894 544l-12.1 23.6" stroke="#8a7c6a" stroke-width="1.0" opacity="0.36"/><path d="M915 375l-7.0 10.2" stroke="#94867a" stroke-width="1.0" opacity="0.29"/><path d="M1052 500l-0.8 15.1" stroke="#30251c" stroke-width="1.1" opacity="0.27"/><path d="M1046 443l-3.6 13.4" stroke="#7a6a58" stroke-width="0.7" opacity="0.31"/><path d="M924 460l-15.0 23.0" stroke="#7e6e5e" stroke-width="0.8" opacity="0.47"/><path d="M956 416l-6.9 13.2" stroke="#30251c" stroke-width="0.9" opacity="0.42"/><path d="M917 363l-13.9 21.6" stroke="#9a8c7a" stroke-width="1.0" opacity="0.44"/><path d="M963 504l-8.5 17.4" stroke="#a89a88" stroke-width="1.0" opacity="0.39"/><path d="M913 391l-11.9 17.3" stroke="#8a7c6a" stroke-width="1.1" opacity="0.41"/><path d="M1058 446l0.6 16.9" stroke="#574636" stroke-width="1.2" opacity="0.22"/><path d="M1059 468l2.4 18.8" stroke="#a89a88" stroke-width="1.0" opacity="0.42"/><path d="M1084 473l-0.9 16.8" stroke="#3a2e24" stroke-width="0.9" opacity="0.31"/><path d="M963 456l-10.4 17.9" stroke="#9a8c7a" stroke-width="1.2" opacity="0.44"/><path d="M997 440l-7.5 11.0" stroke="#a89a88" stroke-width="1.0" opacity="0.32"/><path d="M934 516l-7.1 14.3" stroke="#30251c" stroke-width="1.3" opacity="0.27"/><path d="M980 534l-6.2 8.1" stroke="#3a2e24" stroke-width="0.9" opacity="0.36"/><path d="M953 475l-8.4 15.8" stroke="#94867a" stroke-width="0.9" opacity="0.31"/><path d="M1019 421l-6.5 26.3" stroke="#30251c" stroke-width="0.8" opacity="0.32"/><path d="M974 463l-9.4 18.0" stroke="#94867a" stroke-width="1.0" opacity="0.33"/><path d="M1026 551l-4.6 15.5" stroke="#8a7c6a" stroke-width="0.8" opacity="0.30"/><path d="M1109 517l-3.3 18.9" stroke="#2a2018" stroke-width="1.1" opacity="0.43"/><path d="M1112 529l-2.7 17.4" stroke="#2a2018" stroke-width="1.2" opacity="0.27"/><path d="M1089 433l-0.1 7.8" stroke="#7a6a58" stroke-width="1.0" opacity="0.38"/><path d="M1049 490l-4.5 9.2" stroke="#9a8c7a" stroke-width="1.3" opacity="0.32"/><path d="M903 353l-6.2 8.5" stroke="#2a2018" stroke-width="1.2" opacity="0.45"/><path d="M1000 379l-6.9 11.7" stroke="#a89a88" stroke-width="0.8" opacity="0.42"/><path d="M905 370l-6.9 11.1" stroke="#3a2e24" stroke-width="1.1" opacity="0.43"/><path d="M895 353l-13.4 19.8" stroke="#30251c" stroke-width="0.9" opacity="0.26"/><path d="M942 370l-13.5 22.5" stroke="#7e6e5e" stroke-width="0.8" opacity="0.38"/><path d="M885 394l-8.3 15.0" stroke="#9a8c7a" stroke-width="1.0" opacity="0.38"/><path d="M938 359l-12.5 23.7" stroke="#7e6e5e" stroke-width="0.7" opacity="0.45"/><path d="M987 435l-6.7 12.9" stroke="#8a7c6a" stroke-width="0.8" opacity="0.32"/><path d="M1048 395l-1.9 10.7" stroke="#4a3a2e" stroke-width="1.2" opacity="0.28"/><path d="M921 422l-5.9 12.0" stroke="#2a2018" stroke-width="0.9" opacity="0.31"/><path d="M958 526l-8.1 13.9" stroke="#8a7c6a" stroke-width="1.0" opacity="0.46"/><path d="M1010 428l-10.3 15.3" stroke="#94867a" stroke-width="0.7" opacity="0.39"/><path d="M960 381l-13.6 18.2" stroke="#2a2018" stroke-width="1.0" opacity="0.42"/><path d="M1010 444l-14.0 19.9" stroke="#7e6e5e" stroke-width="0.9" opacity="0.41"/><path d="M968 544l-6.2 12.3" stroke="#30251c" stroke-width="0.8" opacity="0.34"/><path d="M911 493l-6.7 13.1" stroke="#7e6e5e" stroke-width="1.0" opacity="0.33"/><path d="M999 375l-11.7 20.4" stroke="#8a7c6a" stroke-width="1.0" opacity="0.29"/><path d="M1061 428l-0.2 15.3" stroke="#4a3a2e" stroke-width="0.9" opacity="0.24"/><path d="M921 522l-7.9 13.7" stroke="#8a7c6a" stroke-width="0.7" opacity="0.46"/><path d="M1068 503l0.6 13.5" stroke="#8a7c6a" stroke-width="0.8" opacity="0.25"/><path d="M1048 407l-2.0 11.9" stroke="#7a6a58" stroke-width="0.8" opacity="0.32"/><path d="M1067 490l-5.2 25.6" stroke="#3a2e24" stroke-width="0.8" opacity="0.44"/><path d="M962 477l-7.9 10.7" stroke="#30251c" stroke-width="1.1" opacity="0.23"/><path d="M889 383l-7.7 11.2" stroke="#94867a" stroke-width="1.1" opacity="0.36"/><path d="M1027 540l-7.5 18.7" stroke="#3a2e24" stroke-width="1.1" opacity="0.29"/><path d="M982 488l-10.0 12.8" stroke="#2a2018" stroke-width="1.2" opacity="0.45"/><path d="M1017 491l-6.5 26.7" stroke="#9a8c7a" stroke-width="1.2" opacity="0.27"/><path d="M1094 501l0.4 11.5" stroke="#94867a" stroke-width="1.3" opacity="0.38"/><path d="M932 457l-7.3 14.6" stroke="#3a2e24" stroke-width="1.3" opacity="0.40"/><path d="M1053 518l-1.1 21.3" stroke="#9a8c7a" stroke-width="1.1" opacity="0.27"/><path d="M1038 521l-7.1 22.9" stroke="#30251c" stroke-width="0.7" opacity="0.40"/><path d="M1069 403l1.8 13.8" stroke="#7a6a58" stroke-width="0.8" opacity="0.24"/><path d="M964 433l-7.7 11.3" stroke="#a89a88" stroke-width="1.1" opacity="0.35"/><path d="M993 493l-5.0 8.8" stroke="#a89a88" stroke-width="1.3" opacity="0.31"/><path d="M950 529l-6.5 10.7" stroke="#7e6e5e" stroke-width="1.1" opacity="0.25"/><path d="M979 540l-13.1 17.9" stroke="#3a2e24" stroke-width="1.2" opacity="0.33"/><path d="M928 489l-5.4 8.7" stroke="#9a8c7a" stroke-width="0.7" opacity="0.29"/><path d="M926 492l-10.8 14.5" stroke="#7e6e5e" stroke-width="1.0" opacity="0.37"/><path d="M948 463l-5.8 9.1" stroke="#3a2e24" stroke-width="0.8" opacity="0.41"/><path d="M1109 464l-0.5 11.9" stroke="#94867a" stroke-width="1.0" opacity="0.42"/><path d="M955 423l-6.6 9.6" stroke="#2a2018" stroke-width="1.1" opacity="0.24"/><path d="M1055 355l-1.9 11.8" stroke="#3e3026" stroke-width="1.3" opacity="0.36"/><path d="M1090 488l0.5 11.8" stroke="#2a2018" stroke-width="1.1" opacity="0.30"/><path d="M923 517l-8.7 13.1" stroke="#7e6e5e" stroke-width="1.2" opacity="0.29"/><path d="M894 372l-11.1 21.8" stroke="#94867a" stroke-width="1.2" opacity="0.47"/><path d="M996 451l-7.3 10.6" stroke="#8a7c6a" stroke-width="0.8" opacity="0.28"/><path d="M912 479l-7.6 15.4" stroke="#3a2e24" stroke-width="1.0" opacity="0.28"/><path d="M967 356l-9.9 18.5" stroke="#94867a" stroke-width="0.8" opacity="0.24"/><path d="M893 494l-15.8 20.7" stroke="#9a8c7a" stroke-width="1.1" opacity="0.43"/><path d="M1092 383l-0.6 10.7" stroke="#3e3026" stroke-width="1.0" opacity="0.36"/><path d="M1001 437l-10.0 16.9" stroke="#a89a88" stroke-width="1.3" opacity="0.47"/><path d="M1025 514l-2.6 10.8" stroke="#2a2018" stroke-width="1.0" opacity="0.33"/><path d="M966 483l-5.8 11.0" stroke="#9a8c7a" stroke-width="1.2" opacity="0.28"/><path d="M1053 490l-0.1 12.6" stroke="#94867a" stroke-width="0.9" opacity="0.28"/><path d="M983 403l-6.3 12.6" stroke="#30251c" stroke-width="1.0" opacity="0.25"/><path d="M1082 401l-0.2 8.2" stroke="#574636" stroke-width="0.8" opacity="0.34"/><path d="M1007 491l-10.6 20.7" stroke="#8a7c6a" stroke-width="1.2" opacity="0.40"/><path d="M1067 377l-0.4 13.3" stroke="#4a3a2e" stroke-width="1.0" opacity="0.40"/><path d="M1007 546l-7.2 11.4" stroke="#8a7c6a" stroke-width="0.8" opacity="0.42"/><path d="M893 398l-10.2 13.2" stroke="#30251c" stroke-width="1.0" opacity="0.25"/><path d="M912 534l-5.1 10.4" stroke="#30251c" stroke-width="1.0" opacity="0.46"/><path d="M1084 384l-1.5 16.3" stroke="#7a6a58" stroke-width="0.8" opacity="0.32"/><path d="M1053 542l-4.4 22.6" stroke="#7e6e5e" stroke-width="0.8" opacity="0.36"/><path d="M1068 373l0.5 18.7" stroke="#7a6a58" stroke-width="0.8" opacity="0.34"/><path d="M1076 467l-2.4 11.8" stroke="#8a7c6a" stroke-width="0.7" opacity="0.29"/><path d="M915 538l-12.9 22.3" stroke="#a89a88" stroke-width="1.1" opacity="0.29"/><path d="M1113 504l-0.8 14.8" stroke="#9a8c7a" stroke-width="0.9" opacity="0.26"/><path d="M997 526l-14.9 19.3" stroke="#a89a88" stroke-width="1.1" opacity="0.39"/><path d="M1020 520l-6.4 26.7" stroke="#3a2e24" stroke-width="0.9" opacity="0.45"/><path d="M1023 365l-4.2 10.3" stroke="#4a3a2e" stroke-width="0.8" opacity="0.43"/><path d="M1050 417l1.5 12.8" stroke="#4a3a2e" stroke-width="0.9" opacity="0.35"/><path d="M933 400l-13.2 22.2" stroke="#a89a88" stroke-width="1.1" opacity="0.26"/><path d="M970 363l-15.5 23.2" stroke="#a89a88" stroke-width="1.3" opacity="0.23"/><path d="M1011 506l-5.4 25.1" stroke="#8a7c6a" stroke-width="0.9" opacity="0.29"/><path d="M1066 526l0.8 26.9" stroke="#2a2018" stroke-width="1.3" opacity="0.31"/><path d="M965 522l-6.7 12.8" stroke="#94867a" stroke-width="0.9" opacity="0.40"/><path d="M1037 528l-7.0 23.0" stroke="#30251c" stroke-width="1.2" opacity="0.48"/><path d="M915 391l-13.0 22.5" stroke="#94867a" stroke-width="1.0" opacity="0.37"/><path d="M951 384l-6.3 9.2" stroke="#2a2018" stroke-width="0.9" opacity="0.37"/><path d="M1034 545l-4.3 10.5" stroke="#8a7c6a" stroke-width="1.1" opacity="0.30"/><path d="M963 445l-13.6 23.9" stroke="#8a7c6a" stroke-width="1.2" opacity="0.30"/><path d="M921 531l-9.6 17.4" stroke="#2a2018" stroke-width="0.8" opacity="0.23"/><path d="M891 440l-14.8 21.5" stroke="#8a7c6a" stroke-width="0.8" opacity="0.41"/><path d="M1105 471l0.8 11.4" stroke="#7e6e5e" stroke-width="1.1" opacity="0.22"/><path d="M943 480l-5.8 8.5" stroke="#9a8c7a" stroke-width="0.8" opacity="0.30"/><path d="M1055 481l0.5 17.3" stroke="#7e6e5e" stroke-width="0.8" opacity="0.44"/><path d="M1066 368l0.9 14.7" stroke="#7a6a58" stroke-width="1.3" opacity="0.45"/><path d="M886 414l-12.3 18.0" stroke="#94867a" stroke-width="1.1" opacity="0.41"/><path d="M957 369l-7.6 10.3" stroke="#8a7c6a" stroke-width="0.9" opacity="0.31"/><path d="M961 487l-15.1 20.7" stroke="#7e6e5e" stroke-width="0.8" opacity="0.38"/><path d="M1070 446l0.1 7.4" stroke="#7a6a58" stroke-width="0.9" opacity="0.36"/><path d="M944 401l-12.0 16.1" stroke="#7e6e5e" stroke-width="0.8" opacity="0.38"/><path d="M974 548l-13.6 23.1" stroke="#8a7c6a" stroke-width="0.7" opacity="0.35"/><path d="M1010 387l-14.9 22.4" stroke="#a89a88" stroke-width="1.2" opacity="0.45"/><path d="M1080 507l-1.7 19.4" stroke="#30251c" stroke-width="1.0" opacity="0.44"/><path d="M930 534l-14.4 21.9" stroke="#30251c" stroke-width="0.9" opacity="0.45"/><path d="M905 498l-5.6 9.7" stroke="#94867a" stroke-width="1.1" opacity="0.31"/><path d="M933 426l-14.5 22.0" stroke="#30251c" stroke-width="0.7" opacity="0.23"/><path d="M1046 399l-3.9 10.8" stroke="#7a6a58" stroke-width="0.9" opacity="0.48"/><path d="M931 465l-5.9 11.4" stroke="#2a2018" stroke-width="1.3" opacity="0.26"/><path d="M950 368l-4.7 8.9" stroke="#30251c" stroke-width="0.8" opacity="0.40"/><path d="M1020 442l-3.6 20.1" stroke="#30251c" stroke-width="1.2" opacity="0.41"/><path d="M891 506l-9.7 15.1" stroke="#a89a88" stroke-width="1.3" opacity="0.30"/><path d="M886 373l-16.9 21.7" stroke="#2a2018" stroke-width="0.8" opacity="0.41"/><path d="M903 384l-13.4 17.8" stroke="#7e6e5e" stroke-width="1.1" opacity="0.39"/><path d="M973 418l-13.4 22.4" stroke="#30251c" stroke-width="1.2" opacity="0.40"/><path d="M889 452l-7.7 11.9" stroke="#8a7c6a" stroke-width="1.1" opacity="0.23"/><path d="M1089 363l1.0 8.3" stroke="#574636" stroke-width="0.7" opacity="0.28"/><path d="M1006 478l-8.7 17.8" stroke="#7e6e5e" stroke-width="1.2" opacity="0.47"/><path d="M898 546l-11.2 22.7" stroke="#30251c" stroke-width="1.1" opacity="0.29"/><path d="M921 403l-6.8 8.9" stroke="#9a8c7a" stroke-width="0.9" opacity="0.36"/><path d="M965 352l-11.2 19.4" stroke="#2a2018" stroke-width="1.0" opacity="0.40"/><path d="M1110 527l-1.6 22.9" stroke="#7e6e5e" stroke-width="1.0" opacity="0.32"/><path d="M915 504l-12.3 22.8" stroke="#9a8c7a" stroke-width="0.8" opacity="0.35"/><path d="M1111 490l3.1 22.9" stroke="#30251c" stroke-width="1.1" opacity="0.24"/><path d="M1025 357l-5.1 15.2" stroke="#574636" stroke-width="1.0" opacity="0.30"/><path d="M1107 350l1.4 16.3" stroke="#574636" stroke-width="0.8" opacity="0.38"/><path d="M1054 427l-1.2 15.9" stroke="#7a6a58" stroke-width="0.7" opacity="0.43"/><path d="M1035 537l-8.6 22.2" stroke="#3a2e24" stroke-width="1.2" opacity="0.31"/><path d="M1018 465l-11.7 25.4" stroke="#7e6e5e" stroke-width="1.0" opacity="0.36"/><path d="M1070 398l0.7 9.1" stroke="#3e3026" stroke-width="1.1" opacity="0.44"/><path d="M1089 525l-0.8 10.7" stroke="#94867a" stroke-width="0.8" opacity="0.26"/><path d="M939 371l-7.8 14.4" stroke="#2a2018" stroke-width="1.0" opacity="0.24"/><path d="M973 551l-12.1 19.0" stroke="#3a2e24" stroke-width="1.1" opacity="0.27"/><path d="M1001 351l-6.6 10.5" stroke="#30251c" stroke-width="1.1" opacity="0.36"/><path d="M1068 401l-2.9 13.7" stroke="#4a3a2e" stroke-width="1.1" opacity="0.30"/><path d="M1007 535l-8.3 12.0" stroke="#3a2e24" stroke-width="0.8" opacity="0.39"/><path d="M1081 391l0.8 12.3" stroke="#4a3a2e" stroke-width="1.1" opacity="0.32"/><path d="M890 502l-14.9 23.1" stroke="#2a2018" stroke-width="0.9" opacity="0.32"/><path d="M1015 537l-2.0 13.3" stroke="#7e6e5e" stroke-width="0.7" opacity="0.27"/><path d="M1081 366l-0.9 12.6" stroke="#574636" stroke-width="1.3" opacity="0.39"/><path d="M1065 372l1.6 14.0" stroke="#574636" stroke-width="1.3" opacity="0.27"/><path d="M895 430l-6.0 10.9" stroke="#9a8c7a" stroke-width="1.1" opacity="0.41"/><path d="M974 358l-11.6 19.0" stroke="#94867a" stroke-width="1.2" opacity="0.25"/><path d="M932 366l-14.8 19.8" stroke="#8a7c6a" stroke-width="1.2" opacity="0.28"/><path d="M986 516l-7.6 11.3" stroke="#9a8c7a" stroke-width="1.0" opacity="0.41"/><path d="M1077 378l-2.3 11.9" stroke="#7a6a58" stroke-width="0.9" opacity="0.35"/><path d="M881 550l-8.5 12.3" stroke="#7e6e5e" stroke-width="0.9" opacity="0.39"/><path d="M950 430l-12.9 22.5" stroke="#2a2018" stroke-width="0.9" opacity="0.45"/><path d="M1068 523l-2.0 14.5" stroke="#9a8c7a" stroke-width="0.8" opacity="0.39"/><path d="M1098 483l-3.6 22.5" stroke="#7e6e5e" stroke-width="0.8" opacity="0.46"/><path d="M1010 360l-4.4 15.0" stroke="#94867a" stroke-width="1.3" opacity="0.43"/><path d="M888 394l-10.4 14.6" stroke="#30251c" stroke-width="1.2" opacity="0.37"/><path d="M986 539l-8.3 16.0" stroke="#9a8c7a" stroke-width="0.8" opacity="0.44"/><path d="M909 378l-12.2 22.8" stroke="#3a2e24" stroke-width="0.8" opacity="0.46"/><path d="M1011 512l-4.5 18.4" stroke="#2a2018" stroke-width="1.2" opacity="0.36"/><path d="M917 507l-12.1 19.4" stroke="#3a2e24" stroke-width="0.8" opacity="0.42"/><path d="M1103 434l-1.8 15.2" stroke="#574636" stroke-width="0.8" opacity="0.23"/><path d="M1043 358l-6.2 16.4" stroke="#7a6a58" stroke-width="1.1" opacity="0.41"/><path d="M952 402l-11.5 16.2" stroke="#30251c" stroke-width="0.9" opacity="0.23"/><path d="M969 479l-7.3 12.0" stroke="#8a7c6a" stroke-width="0.8" opacity="0.26"/><path d="M923 417l-10.5 13.7" stroke="#7e6e5e" stroke-width="0.8" opacity="0.46"/><path d="M1113 540l-2.1 19.4" stroke="#7e6e5e" stroke-width="0.7" opacity="0.42"/><path d="M1088 534l-1.5 13.5" stroke="#2a2018" stroke-width="1.1" opacity="0.36"/><path d="M901 378l-6.8 13.2" stroke="#30251c" stroke-width="1.0" opacity="0.30"/><path d="M1016 370l-3.8 9.3" stroke="#a89a88" stroke-width="1.1" opacity="0.23"/><path d="M958 441l-7.0 12.6" stroke="#a89a88" stroke-width="0.8" opacity="0.44"/><path d="M1069 496l0.9 18.2" stroke="#8a7c6a" stroke-width="1.2" opacity="0.37"/><path d="M988 357l-11.5 15.4" stroke="#a89a88" stroke-width="0.9" opacity="0.44"/><path d="M898 497l-12.9 19.3" stroke="#8a7c6a" stroke-width="0.9" opacity="0.44"/><path d="M1084 447l-1.6 8.7" stroke="#4a3a2e" stroke-width="0.8" opacity="0.29"/><path d="M1007 416l-7.5 12.3" stroke="#9a8c7a" stroke-width="1.0" opacity="0.32"/><path d="M926 432l-8.1 11.0" stroke="#30251c" stroke-width="1.1" opacity="0.36"/><path d="M936 369l-7.2 9.5" stroke="#30251c" stroke-width="1.1" opacity="0.28"/><path d="M1056 381l-2.0 10.1" stroke="#4a3a2e" stroke-width="0.9" opacity="0.45"/><path d="M900 467l-7.3 12.2" stroke="#9a8c7a" stroke-width="1.2" opacity="0.24"/><path d="M959 370l-6.7 12.2" stroke="#a89a88" stroke-width="1.2" opacity="0.31"/><path d="M1070 443l-3.8 18.2" stroke="#574636" stroke-width="0.7" opacity="0.43"/><path d="M915 453l-6.2 11.4" stroke="#a89a88" stroke-width="0.8" opacity="0.46"/><path d="M1041 493l-4.9 10.1" stroke="#3a2e24" stroke-width="0.7" opacity="0.36"/><path d="M957 364l-12.6 16.6" stroke="#9a8c7a" stroke-width="1.2" opacity="0.42"/><path d="M902 495l-9.6 13.2" stroke="#3a2e24" stroke-width="1.1" opacity="0.41"/><path d="M912 517l-12.3 23.9" stroke="#3a2e24" stroke-width="1.2" opacity="0.43"/><path d="M1018 438l-5.1 24.3" stroke="#2a2018" stroke-width="1.1" opacity="0.37"/><path d="M1033 478l-2.3 11.0" stroke="#2a2018" stroke-width="1.2" opacity="0.44"/><path d="M936 469l-9.3 17.8" stroke="#9a8c7a" stroke-width="0.9" opacity="0.42"/><path d="M1066 488l2.1 26.9" stroke="#94867a" stroke-width="1.3" opacity="0.28"/><path d="M1037 510l-3.7 21.6" stroke="#94867a" stroke-width="1.2" opacity="0.22"/><path d="M994 353l-5.7 10.6" stroke="#94867a" stroke-width="0.9" opacity="0.30"/><path d="M914 460l-6.3 9.6" stroke="#3a2e24" stroke-width="1.1" opacity="0.30"/><path d="M901 405l-12.2 19.0" stroke="#30251c" stroke-width="0.8" opacity="0.40"/><path d="M890 516l-7.6 10.9" stroke="#a89a88" stroke-width="0.9" opacity="0.28"/><path d="M1088 473l-1.9 26.0" stroke="#3a2e24" stroke-width="0.9" opacity="0.45"/><path d="M1065 473l3.3 25.2" stroke="#94867a" stroke-width="1.0" opacity="0.22"/><path d="M921 541l-8.6 16.0" stroke="#2a2018" stroke-width="1.1" opacity="0.40"/><path d="M1110 498l0.5 23.6" stroke="#a89a88" stroke-width="1.3" opacity="0.45"/><path d="M1036 365l-4.6 14.1" stroke="#7a6a58" stroke-width="0.9" opacity="0.40"/><path d="M1041 539l-10.3 22.3" stroke="#3a2e24" stroke-width="1.0" opacity="0.40"/><path d="M884 527l-15.5 20.9" stroke="#94867a" stroke-width="1.0" opacity="0.42"/><path d="M1089 497l-4.6 23.0" stroke="#7e6e5e" stroke-width="1.0" opacity="0.22"/><path d="M1099 405l1.0 9.3" stroke="#574636" stroke-width="0.8" opacity="0.37"/><path d="M1110 477l0.9 14.3" stroke="#9a8c7a" stroke-width="1.0" opacity="0.47"/><path d="M1032 513l-7.3 20.9" stroke="#7e6e5e" stroke-width="1.1" opacity="0.29"/><path d="M918 466l-11.9 21.9" stroke="#7e6e5e" stroke-width="1.2" opacity="0.27"/><path d="M1069 362l-0.3 10.9" stroke="#4a3a2e" stroke-width="1.1" opacity="0.47"/><path d="M1062 423l-1.8 15.6" stroke="#3e3026" stroke-width="1.1" opacity="0.46"/><path d="M974 488l-9.3 13.7" stroke="#3a2e24" stroke-width="0.9" opacity="0.27"/><path d="M1093 441l0.2 17.5" stroke="#4a3a2e" stroke-width="0.8" opacity="0.42"/><path d="M990 463l-10.7 19.3" stroke="#2a2018" stroke-width="0.9" opacity="0.41"/><path d="M973 514l-15.1 20.3" stroke="#3a2e24" stroke-width="1.2" opacity="0.23"/><path d="M1073 464l1.9 16.3" stroke="#2a2018" stroke-width="1.3" opacity="0.45"/><path d="M1085 369l1.2 14.5" stroke="#7a6a58" stroke-width="0.8" opacity="0.27"/><path d="M1049 500l-3.9 11.5" stroke="#7e6e5e" stroke-width="0.9" opacity="0.35"/><path d="M959 525l-13.5 18.4" stroke="#94867a" stroke-width="1.1" opacity="0.45"/><path d="M911 418l-6.1 9.4" stroke="#9a8c7a" stroke-width="1.2" opacity="0.39"/><path d="M1015 432l-7.3 19.0" stroke="#a89a88" stroke-width="0.8" opacity="0.39"/><path d="M1056 451l2.7 26.0" stroke="#94867a" stroke-width="1.2" opacity="0.25"/><path d="M1045 492l-7.6 19.6" stroke="#8a7c6a" stroke-width="1.2" opacity="0.38"/><path d="M999 473l-14.8 21.7" stroke="#7e6e5e" stroke-width="1.1" opacity="0.47"/><path d="M1068 423l-2.9 15.5" stroke="#3e3026" stroke-width="0.7" opacity="0.38"/><path d="M912 406l-6.0 9.3" stroke="#9a8c7a" stroke-width="0.7" opacity="0.44"/><path d="M906 395l-11.9 17.7" stroke="#7e6e5e" stroke-width="1.0" opacity="0.28"/><path d="M1010 516l-2.2 14.9" stroke="#9a8c7a" stroke-width="0.8" opacity="0.26"/><path d="M1070 404l1.4 11.6" stroke="#4a3a2e" stroke-width="1.1" opacity="0.32"/><path d="M1000 469l-6.5 12.5" stroke="#9a8c7a" stroke-width="1.2" opacity="0.47"/><path d="M957 549l-6.0 9.5" stroke="#a89a88" stroke-width="1.0" opacity="0.47"/><path d="M1086 475l0.1 13.4" stroke="#8a7c6a" stroke-width="0.9" opacity="0.29"/><path d="M925 499l-10.4 16.2" stroke="#30251c" stroke-width="1.2" opacity="0.41"/><path d="M1061 391l1.4 16.5" stroke="#4a3a2e" stroke-width="1.3" opacity="0.41"/><path d="M1048 363l-4.2 8.6" stroke="#7a6a58" stroke-width="1.1" opacity="0.37"/><path d="M954 422l-5.8 10.4" stroke="#7e6e5e" stroke-width="1.0" opacity="0.23"/><path d="M1047 506l-3.0 15.9" stroke="#7e6e5e" stroke-width="1.2" opacity="0.34"/><path d="M1112 534l-1.0 24.3" stroke="#a89a88" stroke-width="1.2" opacity="0.36"/><path d="M939 429l-8.2 14.2" stroke="#30251c" stroke-width="1.1" opacity="0.47"/><path d="M1109 438l-1.2 16.2" stroke="#3e3026" stroke-width="0.8" opacity="0.25"/><path d="M1050 457l0.8 10.5" stroke="#8a7c6a" stroke-width="1.0" opacity="0.23"/><path d="M1088 458l-1.1 11.2" stroke="#3a2e24" stroke-width="1.0" opacity="0.39"/><path d="M928 399l-14.5 22.0" stroke="#8a7c6a" stroke-width="0.8" opacity="0.45"/><path d="M1101 439l1.6 14.1" stroke="#4a3a2e" stroke-width="1.0" opacity="0.41"/><path d="M1082 384l1.4 15.2" stroke="#574636" stroke-width="1.1" opacity="0.34"/><path d="M913 534l-12.6 16.5" stroke="#30251c" stroke-width="1.2" opacity="0.45"/><path d="M881 464l-13.5 19.1" stroke="#9a8c7a" stroke-width="0.8" opacity="0.46"/><path d="M927 350l-10.1 15.4" stroke="#30251c" stroke-width="1.2" opacity="0.23"/><path d="M1010 467l-7.4 15.8" stroke="#3a2e24" stroke-width="0.7" opacity="0.42"/><path d="M904 547l-13.3 18.5" stroke="#a89a88" stroke-width="1.1" opacity="0.30"/><path d="M999 543l-7.8 15.0" stroke="#8a7c6a" stroke-width="1.2" opacity="0.36"/><path d="M1072 451l-0.0 21.2" stroke="#8a7c6a" stroke-width="1.1" opacity="0.39"/><path d="M1024 442l-4.2 14.9" stroke="#4a3a2e" stroke-width="0.8" opacity="0.35"/><path d="M1076 392l0.8 15.9" stroke="#4a3a2e" stroke-width="1.1" opacity="0.24"/><path d="M1002 487l-6.7 9.5" stroke="#8a7c6a" stroke-width="0.8" opacity="0.29"/><path d="M952 410l-9.8 16.2" stroke="#7e6e5e" stroke-width="1.2" opacity="0.22"/><path d="M898 373l-11.5 19.3" stroke="#94867a" stroke-width="1.0" opacity="0.33"/><path d="M1023 481l-5.9 25.8" stroke="#8a7c6a" stroke-width="1.2" opacity="0.44"/><path d="M1048 356l-2.9 15.3" stroke="#4a3a2e" stroke-width="0.8" opacity="0.47"/><path d="M983 493l-8.2 12.0" stroke="#7e6e5e" stroke-width="0.7" opacity="0.32"/><path d="M918 383l-13.6 23.4" stroke="#3a2e24" stroke-width="1.2" opacity="0.44"/><path d="M1113 502l-1.8 14.8" stroke="#94867a" stroke-width="1.0" opacity="0.31"/><path d="M1007 422l-15.2 19.5" stroke="#30251c" stroke-width="1.2" opacity="0.43"/><path d="M1004 371l-14.0 20.6" stroke="#7e6e5e" stroke-width="0.9" opacity="0.36"/><path d="M1106 383l0.2 13.7" stroke="#574636" stroke-width="1.3" opacity="0.35"/><path d="M1062 478l-2.9 21.5" stroke="#9a8c7a" stroke-width="1.1" opacity="0.33"/><path d="M908 541l-10.7 18.1" stroke="#a89a88" stroke-width="1.1" opacity="0.41"/><path d="M1056 400l-2.0 10.0" stroke="#7a6a58" stroke-width="1.1" opacity="0.39"/><path d="M1053 379l-1.5 7.7" stroke="#7a6a58" stroke-width="0.7" opacity="0.41"/><path d="M1005 365l-5.9 9.7" stroke="#3a2e24" stroke-width="1.1" opacity="0.35"/><path d="M1085 536l1.9 18.0" stroke="#2a2018" stroke-width="0.9" opacity="0.33"/><path d="M1041 440l-6.7 14.7" stroke="#7a6a58" stroke-width="0.9" opacity="0.27"/><path d="M971 508l-6.9 9.7" stroke="#7e6e5e" stroke-width="1.1" opacity="0.29"/><path d="M882 388l-15.5 21.2" stroke="#2a2018" stroke-width="1.1" opacity="0.27"/><path d="M914 370l-15.2 23.1" stroke="#8a7c6a" stroke-width="1.0" opacity="0.28"/><path d="M895 353l-15.1 20.4" stroke="#7e6e5e" stroke-width="0.9" opacity="0.41"/><path d="M912 509l-8.0 12.1" stroke="#8a7c6a" stroke-width="1.2" opacity="0.46"/><path d="M919 504l-16.4 21.2" stroke="#30251c" stroke-width="1.2" opacity="0.42"/><path d="M1080 399l-2.1 18.1" stroke="#4a3a2e" stroke-width="0.8" opacity="0.32"/><path d="M966 407l-9.8 15.7" stroke="#8a7c6a" stroke-width="1.0" opacity="0.40"/><path d="M902 374l-10.9 15.1" stroke="#30251c" stroke-width="1.0" opacity="0.24"/><path d="M925 404l-10.4 14.7" stroke="#7e6e5e" stroke-width="1.0" opacity="0.24"/><path d="M932 500l-9.3 17.8" stroke="#94867a" stroke-width="0.8" opacity="0.47"/><path d="M1003 398l-6.1 11.6" stroke="#30251c" stroke-width="0.8" opacity="0.34"/><path d="M990 541l-14.3 19.4" stroke="#3a2e24" stroke-width="1.1" opacity="0.25"/><path d="M946 509l-5.5 9.8" stroke="#3a2e24" stroke-width="1.0" opacity="0.27"/><path d="M883 482l-11.8 15.2" stroke="#3a2e24" stroke-width="1.1" opacity="0.23"/><path d="M1032 506l-8.8 20.1" stroke="#7e6e5e" stroke-width="0.8" opacity="0.43"/><path d="M1101 500l-2.1 25.3" stroke="#a89a88" stroke-width="1.1" opacity="0.22"/><path d="M987 496l-8.4 16.0" stroke="#2a2018" stroke-width="1.0" opacity="0.26"/><path d="M925 501l-9.2 18.3" stroke="#94867a" stroke-width="0.7" opacity="0.26"/><path d="M964 448l-6.2 9.3" stroke="#3a2e24" stroke-width="1.1" opacity="0.28"/><path d="M1092 389l-1.3 12.9" stroke="#7a6a58" stroke-width="0.8" opacity="0.47"/><path d="M955 432l-8.1 14.0" stroke="#9a8c7a" stroke-width="1.0" opacity="0.42"/><path d="M936 519l-6.1 11.3" stroke="#3a2e24" stroke-width="1.0" opacity="0.36"/><path d="M970 403l-11.5 16.5" stroke="#94867a" stroke-width="0.8" opacity="0.26"/><path d="M1002 467l-15.7 20.6" stroke="#30251c" stroke-width="1.0" opacity="0.24"/><path d="M1072 510l-0.2 14.6" stroke="#30251c" stroke-width="1.2" opacity="0.47"/><path d="M943 540l-10.5 13.8" stroke="#8a7c6a" stroke-width="1.3" opacity="0.46"/><path d="M897 502l-7.8 10.6" stroke="#8a7c6a" stroke-width="1.0" opacity="0.44"/><path d="M1069 482l-3.2 19.0" stroke="#30251c" stroke-width="1.0" opacity="0.36"/><path d="M1039 425l-3.7 13.1" stroke="#4a3a2e" stroke-width="1.1" opacity="0.29"/><path d="M969 524l-13.7 23.5" stroke="#94867a" stroke-width="0.9" opacity="0.36"/><path d="M1039 365l-4.2 15.8" stroke="#3e3026" stroke-width="1.1" opacity="0.43"/><path d="M882 446l-10.9 19.3" stroke="#a89a88" stroke-width="1.0" opacity="0.30"/><path d="M1107 548l1.5 11.5" stroke="#94867a" stroke-width="0.9" opacity="0.25"/><path d="M1055 425l-1.2 15.9" stroke="#7a6a58" stroke-width="0.8" opacity="0.28"/><path d="M930 404l-6.3 8.6" stroke="#94867a" stroke-width="1.1" opacity="0.39"/><path d="M990 442l-8.3 13.6" stroke="#7e6e5e" stroke-width="1.1" opacity="0.33"/><path d="M921 447l-5.1 8.9" stroke="#a89a88" stroke-width="0.9" opacity="0.25"/><path d="M1027 409l-5.3 12.9" stroke="#3e3026" stroke-width="0.9" opacity="0.44"/><path d="M1032 383l-2.4 7.4" stroke="#3e3026" stroke-width="1.2" opacity="0.37"/><path d="M976 463l-5.0 9.3" stroke="#a89a88" stroke-width="0.8" opacity="0.28"/><path d="M921 385l-12.5 23.0" stroke="#30251c" stroke-width="0.7" opacity="0.25"/><path d="M1099 546l-1.2 12.6" stroke="#7e6e5e" stroke-width="0.9" opacity="0.33"/><path d="M992 402l-6.6 8.8" stroke="#a89a88" stroke-width="0.9" opacity="0.24"/><path d="M892 547l-5.7 11.0" stroke="#7e6e5e" stroke-width="0.9" opacity="0.35"/><path d="M924 538l-12.2 16.0" stroke="#a89a88" stroke-width="1.2" opacity="0.33"/><path d="M949 353l-9.4 12.4" stroke="#3a2e24" stroke-width="0.8" opacity="0.37"/><path d="M925 493l-11.7 21.5" stroke="#30251c" stroke-width="1.1" opacity="0.43"/><path d="M990 438l-4.6 9.1" stroke="#30251c" stroke-width="0.8" opacity="0.38"/><path d="M936 402l-9.2 15.0" stroke="#9a8c7a" stroke-width="0.7" opacity="0.41"/><path d="M932 409l-10.7 18.7" stroke="#30251c" stroke-width="1.2" opacity="0.27"/><path d="M953 484l-8.7 11.9" stroke="#30251c" stroke-width="1.0" opacity="0.31"/><path d="M1045 488l-4.5 22.2" stroke="#94867a" stroke-width="0.9" opacity="0.41"/><path d="M893 473l-7.1 9.2" stroke="#30251c" stroke-width="0.8" opacity="0.46"/><path d="M1085 443l-1.6 9.4" stroke="#574636" stroke-width="1.0" opacity="0.42"/><path d="M905 364l-9.0 14.4" stroke="#2a2018" stroke-width="1.2" opacity="0.35"/><path d="M985 522l-14.6 22.6" stroke="#7e6e5e" stroke-width="1.0" opacity="0.42"/><path d="M1050 414l-1.6 7.5" stroke="#7a6a58" stroke-width="0.8" opacity="0.44"/><path d="M1101 463l0.3 11.1" stroke="#9a8c7a" stroke-width="0.9" opacity="0.24"/><path d="M1056 506l-3.2 17.6" stroke="#94867a" stroke-width="1.1" opacity="0.41"/><path d="M1052 356l0.5 18.5" stroke="#4a3a2e" stroke-width="0.9" opacity="0.43"/><path d="M1021 432l-4.7 13.5" stroke="#94867a" stroke-width="1.1" opacity="0.31"/><path d="M1089 443l-2.5 13.7" stroke="#574636" stroke-width="0.8" opacity="0.27"/><path d="M1070 503l-2.4 16.9" stroke="#a89a88" stroke-width="1.1" opacity="0.46"/><path d="M995 525l-9.1 16.9" stroke="#9a8c7a" stroke-width="0.9" opacity="0.34"/><path d="M1112 380l-1.7 17.7" stroke="#7a6a58" stroke-width="1.1" opacity="0.39"/><path d="M893 350l-7.9 11.8" stroke="#2a2018" stroke-width="1.1" opacity="0.45"/><path d="M1103 416l1.4 17.6" stroke="#7a6a58" stroke-width="0.9" opacity="0.38"/><path d="M972 407l-16.5 21.3" stroke="#94867a" stroke-width="1.2" opacity="0.42"/><path d="M1013 534l-6.1 23.9" stroke="#9a8c7a" stroke-width="1.3" opacity="0.41"/><path d="M1057 514l0.3 14.6" stroke="#94867a" stroke-width="1.0" opacity="0.30"/><path d="M936 494l-13.4 17.6" stroke="#a89a88" stroke-width="1.2" opacity="0.45"/><path d="M913 540l-11.7 20.3" stroke="#9a8c7a" stroke-width="1.2" opacity="0.44"/><path d="M1109 541l-0.9 18.4" stroke="#30251c" stroke-width="1.1" opacity="0.31"/><path d="M895 374l-11.9 23.1" stroke="#9a8c7a" stroke-width="0.8" opacity="0.24"/><path d="M896 500l-7.3 11.5" stroke="#94867a" stroke-width="0.9" opacity="0.34"/><path d="M968 479l-13.4 22.2" stroke="#7e6e5e" stroke-width="1.2" opacity="0.41"/><path d="M953 527l-12.2 16.3" stroke="#8a7c6a" stroke-width="1.0" opacity="0.33"/><path d="M1086 484l-1.1 13.7" stroke="#7e6e5e" stroke-width="1.3" opacity="0.39"/><path d="M1082 482l-1.0 20.2" stroke="#94867a" stroke-width="0.7" opacity="0.25"/><path d="M1114 387l-0.3 10.7" stroke="#4a3a2e" stroke-width="0.8" opacity="0.41"/><path d="M1068 394l2.5 18.0" stroke="#3e3026" stroke-width="0.9" opacity="0.40"/><path d="M1098 391l-1.0 10.8" stroke="#574636" stroke-width="1.0" opacity="0.35"/><path d="M1036 379l-2.7 18.9" stroke="#3e3026" stroke-width="0.7" opacity="0.39"/><path d="M1086 373l-2.7 13.9" stroke="#3e3026" stroke-width="1.0" opacity="0.45"/><path d="M1079 494l-3.1 22.6" stroke="#3a2e24" stroke-width="1.3" opacity="0.37"/><path d="M914 477l-13.3 20.5" stroke="#2a2018" stroke-width="1.1" opacity="0.28"/><path d="M931 477l-5.3 9.6" stroke="#7e6e5e" stroke-width="1.2" opacity="0.26"/><path d="M1063 459l1.1 14.1" stroke="#30251c" stroke-width="1.1" opacity="0.46"/><path d="M927 468l-11.1 20.1" stroke="#30251c" stroke-width="0.9" opacity="0.44"/><path d="M1096 361l-1.0 18.9" stroke="#4a3a2e" stroke-width="1.2" opacity="0.37"/><path d="M977 415l-7.6 10.7" stroke="#7e6e5e" stroke-width="0.9" opacity="0.41"/><path d="M1113 396l-1.5 17.9" stroke="#7a6a58" stroke-width="0.9" opacity="0.39"/><path d="M984 379l-12.3 16.6" stroke="#2a2018" stroke-width="0.8" opacity="0.34"/><path d="M983 547l-8.4 16.8" stroke="#3a2e24" stroke-width="1.0" opacity="0.34"/><path d="M999 451l-7.9 11.8" stroke="#94867a" stroke-width="1.3" opacity="0.32"/><path d="M963 436l-8.1 14.2" stroke="#94867a" stroke-width="1.1" opacity="0.34"/><path d="M1075 461l0.7 10.7" stroke="#3a2e24" stroke-width="0.9" opacity="0.38"/><path d="M1095 431l-1.3 12.4" stroke="#3e3026" stroke-width="1.1" opacity="0.40"/><path d="M973 416l-11.7 16.5" stroke="#a89a88" stroke-width="1.0" opacity="0.32"/><path d="M923 373l-12.4 23.0" stroke="#9a8c7a" stroke-width="1.1" opacity="0.43"/><path d="M983 405l-11.9 15.3" stroke="#7e6e5e" stroke-width="1.1" opacity="0.34"/><path d="M958 428l-10.0 18.4" stroke="#2a2018" stroke-width="0.7" opacity="0.43"/><path d="M896 514l-13.1 16.8" stroke="#7e6e5e" stroke-width="0.9" opacity="0.35"/><path d="M1100 426l-1.1 7.9" stroke="#3e3026" stroke-width="0.9" opacity="0.28"/><path d="M982 375l-12.5 24.5" stroke="#8a7c6a" stroke-width="1.3" opacity="0.36"/><path d="M1096 368l-1.1 18.6" stroke="#4a3a2e" stroke-width="1.1" opacity="0.44"/><path d="M970 369l-12.4 22.5" stroke="#a89a88" stroke-width="1.3" opacity="0.23"/><path d="M893 375l-5.1 9.0" stroke="#a89a88" stroke-width="0.8" opacity="0.26"/><path d="M922 473l-9.8 19.8" stroke="#7e6e5e" stroke-width="0.8" opacity="0.44"/><path d="M956 433l-9.6 15.3" stroke="#9a8c7a" stroke-width="1.3" opacity="0.40"/><path d="M921 386l-7.1 10.6" stroke="#9a8c7a" stroke-width="1.0" opacity="0.38"/><path d="M1092 508l2.0 19.8" stroke="#9a8c7a" stroke-width="1.0" opacity="0.45"/><path d="M1021 418l-2.7 16.9" stroke="#9a8c7a" stroke-width="1.2" opacity="0.37"/><path d="M913 385l-8.4 14.7" stroke="#9a8c7a" stroke-width="1.0" opacity="0.46"/><path d="M1044 540l-8.4 23.8" stroke="#30251c" stroke-width="1.0" opacity="0.41"/><path d="M976 544l-12.3 24.3" stroke="#a89a88" stroke-width="0.9" opacity="0.32"/><path d="M943 533l-11.6 21.3" stroke="#9a8c7a" stroke-width="1.3" opacity="0.40"/><path d="M954 503l-7.5 12.7" stroke="#a89a88" stroke-width="1.0" opacity="0.36"/><path d="M1103 523l-1.0 27.8" stroke="#9a8c7a" stroke-width="0.8" opacity="0.42"/><path d="M1014 533l-6.5 19.5" stroke="#9a8c7a" stroke-width="0.8" opacity="0.42"/><path d="M904 406l-5.6 10.7" stroke="#3a2e24" stroke-width="1.2" opacity="0.43"/><path d="M899 441l-10.1 13.2" stroke="#2a2018" stroke-width="0.8" opacity="0.39"/><path d="M945 425l-11.9 23.7" stroke="#94867a" stroke-width="1.2" opacity="0.40"/><path d="M1032 406l-5.2 14.2" stroke="#4a3a2e" stroke-width="0.7" opacity="0.44"/><path d="M1070 410l1.3 14.5" stroke="#7a6a58" stroke-width="1.1" opacity="0.32"/><path d="M938 515l-5.7 9.0" stroke="#8a7c6a" stroke-width="0.7" opacity="0.43"/><path d="M1087 394l1.4 14.5" stroke="#7a6a58" stroke-width="0.9" opacity="0.46"/><path d="M923 378l-14.7 19.8" stroke="#a89a88" stroke-width="1.2" opacity="0.29"/><path d="M918 533l-6.5 12.4" stroke="#30251c" stroke-width="0.9" opacity="0.46"/><path d="M932 533l-9.3 18.8" stroke="#8a7c6a" stroke-width="1.1" opacity="0.36"/><path d="M1080 440l0.9 8.2" stroke="#4a3a2e" stroke-width="1.1" opacity="0.28"/><path d="M988 516l-12.4 24.4" stroke="#a89a88" stroke-width="1.0" opacity="0.25"/><path d="M954 530l-12.1 23.5" stroke="#3a2e24" stroke-width="1.0" opacity="0.29"/><path d="M966 462l-12.2 20.3" stroke="#a89a88" stroke-width="0.9" opacity="0.24"/><path d="M969 373l-14.6 23.3" stroke="#2a2018" stroke-width="1.3" opacity="0.32"/><path d="M1008 413l-6.1 8.6" stroke="#8a7c6a" stroke-width="1.3" opacity="0.34"/><path d="M966 507l-13.3 23.4" stroke="#3a2e24" stroke-width="1.3" opacity="0.38"/><path d="M1007 524l-12.2 18.4" stroke="#30251c" stroke-width="0.9" opacity="0.47"/><path d="M937 547l-6.9 8.8" stroke="#8a7c6a" stroke-width="0.8" opacity="0.35"/><path d="M908 519l-11.0 19.1" stroke="#8a7c6a" stroke-width="1.3" opacity="0.40"/><path d="M1047 350l-2.4 7.2" stroke="#7a6a58" stroke-width="1.2" opacity="0.40"/><path d="M1001 421l-11.9 19.4" stroke="#a89a88" stroke-width="0.7" opacity="0.27"/><path d="M922 518l-5.3 10.6" stroke="#2a2018" stroke-width="1.1" opacity="0.41"/><path d="M1104 486l2.3 16.8" stroke="#9a8c7a" stroke-width="0.7" opacity="0.44"/><path d="M1110 372l-1.9 16.3" stroke="#574636" stroke-width="0.9" opacity="0.39"/><path d="M1103 551l0.2 27.9" stroke="#94867a" stroke-width="0.8" opacity="0.41"/><path d="M1009 423l-15.0 21.5" stroke="#a89a88" stroke-width="0.8" opacity="0.26"/><path d="M906 511l-6.9 10.1" stroke="#8a7c6a" stroke-width="1.0" opacity="0.33"/><path d="M1007 353l-6.0 9.3" stroke="#30251c" stroke-width="1.3" opacity="0.22"/><path d="M1090 422l1.4 16.7" stroke="#574636" stroke-width="0.9" opacity="0.42"/><path d="M932 485l-13.5 21.1" stroke="#30251c" stroke-width="1.3" opacity="0.38"/><path d="M922 364l-6.4 9.5" stroke="#8a7c6a" stroke-width="0.9" opacity="0.24"/><path d="M1057 365l-0.9 16.8" stroke="#3e3026" stroke-width="0.9" opacity="0.30"/><path d="M1093 493l-2.7 17.5" stroke="#9a8c7a" stroke-width="1.0" opacity="0.48"/><path d="M1052 500l1.6 24.7" stroke="#2a2018" stroke-width="1.0" opacity="0.31"/><path d="M904 500l-12.1 19.4" stroke="#a89a88" stroke-width="0.8" opacity="0.27"/><path d="M941 442l-7.7 12.1" stroke="#30251c" stroke-width="1.1" opacity="0.25"/><path d="M975 458l-8.4 12.6" stroke="#30251c" stroke-width="0.9" opacity="0.39"/><path d="M932 431l-12.1 18.8" stroke="#a89a88" stroke-width="0.8" opacity="0.23"/><path d="M925 403l-11.7 17.8" stroke="#3a2e24" stroke-width="0.9" opacity="0.25"/><path d="M1096 464l-3.4 17.7" stroke="#3a2e24" stroke-width="0.8" opacity="0.24"/><path d="M982 483l-6.1 8.5" stroke="#9a8c7a" stroke-width="1.2" opacity="0.43"/><path d="M898 512l-8.3 11.7" stroke="#2a2018" stroke-width="0.9" opacity="0.40"/><path d="M966 494l-6.6 13.4" stroke="#3a2e24" stroke-width="0.8" opacity="0.25"/><path d="M1007 437l-6.5 12.7" stroke="#2a2018" stroke-width="1.1" opacity="0.25"/><path d="M969 486l-6.1 8.0" stroke="#7e6e5e" stroke-width="0.8" opacity="0.30"/><path d="M1018 521l-6.4 22.6" stroke="#3a2e24" stroke-width="1.3" opacity="0.39"/><path d="M1102 464l-0.4 13.5" stroke="#3a2e24" stroke-width="1.1" opacity="0.25"/><path d="M963 463l-14.1 24.0" stroke="#a89a88" stroke-width="1.0" opacity="0.33"/><path d="M1035 387l-4.9 12.8" stroke="#7a6a58" stroke-width="1.0" opacity="0.28"/><path d="M1097 453l-1.8 16.7" stroke="#94867a" stroke-width="1.2" opacity="0.23"/><path d="M940 415l-10.9 19.4" stroke="#7e6e5e" stroke-width="1.1" opacity="0.34"/><path d="M900 423l-10.3 19.2" stroke="#94867a" stroke-width="1.1" opacity="0.40"/><path d="M1029 490l-6.3 13.5" stroke="#7e6e5e" stroke-width="0.9" opacity="0.33"/><path d="M1022 530l-9.0 24.0" stroke="#30251c" stroke-width="0.9" opacity="0.34"/><path d="M1048 499l-5.5 12.2" stroke="#30251c" stroke-width="0.9" opacity="0.35"/><path d="M1047 531l-4.6 24.9" stroke="#3a2e24" stroke-width="0.9" opacity="0.26"/><path d="M916 480l-12.7 19.0" stroke="#9a8c7a" stroke-width="1.3" opacity="0.44"/><path d="M958 522l-14.1 21.9" stroke="#30251c" stroke-width="0.8" opacity="0.42"/><path d="M999 372l-7.9 12.6" stroke="#2a2018" stroke-width="1.3" opacity="0.32"/><path d="M923 508l-13.9 18.7" stroke="#7e6e5e" stroke-width="0.9" opacity="0.40"/><path d="M1026 388l-1.7 7.0" stroke="#7a6a58" stroke-width="0.8" opacity="0.40"/><path d="M1079 399l0.8 12.9" stroke="#4a3a2e" stroke-width="0.7" opacity="0.30"/><path d="M1031 472l-7.7 17.5" stroke="#30251c" stroke-width="1.0" opacity="0.48"/><path d="M1094 353l-0.9 9.8" stroke="#3e3026" stroke-width="1.1" opacity="0.33"/><path d="M958 399l-11.3 18.2" stroke="#2a2018" stroke-width="0.9" opacity="0.42"/><path d="M992 549l-6.0 9.2" stroke="#30251c" stroke-width="1.1" opacity="0.27"/><path d="M1020 445l-10.7 25.0" stroke="#8a7c6a" stroke-width="1.3" opacity="0.42"/><path d="M1055 540l-2.6 25.7" stroke="#30251c" stroke-width="1.1" opacity="0.24"/><path d="M1092 387l-0.5 7.0" stroke="#7a6a58" stroke-width="1.3" opacity="0.31"/><path d="M966 494l-6.2 10.0" stroke="#8a7c6a" stroke-width="0.9" opacity="0.44"/><path d="M929 527l-9.2 13.6" stroke="#2a2018" stroke-width="0.9" opacity="0.24"/><path d="M1104 425l0.2 8.4" stroke="#3e3026" stroke-width="0.9" opacity="0.44"/><path d="M959 434l-15.1 22.7" stroke="#94867a" stroke-width="0.7" opacity="0.48"/><path d="M926 457l-9.4 13.5" stroke="#a89a88" stroke-width="1.2" opacity="0.34"/><path d="M1075 426l-3.2 15.9" stroke="#7a6a58" stroke-width="1.1" opacity="0.40"/><path d="M996 445l-8.0 11.0" stroke="#a89a88" stroke-width="1.1" opacity="0.29"/><path d="M1031 378l-5.7 13.6" stroke="#7a6a58" stroke-width="1.0" opacity="0.25"/><path d="M993 475l-7.0 10.3" stroke="#30251c" stroke-width="1.0" opacity="0.38"/><path d="M1063 465l-0.8 14.0" stroke="#7e6e5e" stroke-width="1.0" opacity="0.42"/><path d="M965 441l-12.9 24.2" stroke="#8a7c6a" stroke-width="0.7" opacity="0.38"/><path d="M1019 489l-7.6 17.6" stroke="#8a7c6a" stroke-width="0.8" opacity="0.44"/><path d="M1002 353l-14.1 21.9" stroke="#3a2e24" stroke-width="1.0" opacity="0.44"/><path d="M928 532l-9.8 12.7" stroke="#7e6e5e" stroke-width="0.9" opacity="0.46"/><path d="M885 495l-5.4 9.5" stroke="#2a2018" stroke-width="0.9" opacity="0.41"/><path d="M900 391l-14.0 23.5" stroke="#2a2018" stroke-width="1.0" opacity="0.22"/><path d="M894 408l-7.0 13.9" stroke="#3a2e24" stroke-width="1.1" opacity="0.44"/><path d="M914 491l-8.8 16.1" stroke="#3a2e24" stroke-width="1.2" opacity="0.46"/><path d="M932 405l-14.3 23.1" stroke="#a89a88" stroke-width="1.1" opacity="0.32"/><path d="M932 394l-15.0 22.6" stroke="#7e6e5e" stroke-width="1.0" opacity="0.23"/><path d="M1056 501l-2.2 25.7" stroke="#30251c" stroke-width="0.8" opacity="0.35"/><path d="M1093 539l0.7 12.8" stroke="#94867a" stroke-width="1.3" opacity="0.34"/><path d="M999 509l-6.6 11.8" stroke="#7e6e5e" stroke-width="1.0" opacity="0.45"/><path d="M942 420l-6.9 10.0" stroke="#30251c" stroke-width="0.9" opacity="0.43"/><path d="M1084 411l-2.7 16.8" stroke="#3e3026" stroke-width="0.9" opacity="0.44"/><path d="M1064 487l-1.4 24.6" stroke="#94867a" stroke-width="0.8" opacity="0.25"/><path d="M976 453l-7.3 10.3" stroke="#94867a" stroke-width="0.9" opacity="0.26"/><path d="M923 467l-7.2 11.3" stroke="#30251c" stroke-width="1.0" opacity="0.35"/><path d="M1076 353l-2.6 18.5" stroke="#4a3a2e" stroke-width="1.0" opacity="0.28"/><path d="M1063 412l-2.1 16.0" stroke="#7a6a58" stroke-width="0.9" opacity="0.34"/><path d="M895 480l-13.2 18.1" stroke="#8a7c6a" stroke-width="0.7" opacity="0.37"/><path d="M1090 390l-1.2 9.5" stroke="#7a6a58" stroke-width="1.0" opacity="0.29"/><path d="M950 443l-8.0 14.7" stroke="#94867a" stroke-width="0.8" opacity="0.28"/><path d="M882 417l-5.9 10.4" stroke="#9a8c7a" stroke-width="1.3" opacity="0.27"/><path d="M889 503l-7.9 15.5" stroke="#94867a" stroke-width="0.8" opacity="0.33"/><path d="M1025 513l-5.6 22.8" stroke="#3a2e24" stroke-width="0.9" opacity="0.44"/><path d="M1092 516l-2.6 13.5" stroke="#30251c" stroke-width="1.0" opacity="0.37"/><path d="M937 463l-15.4 20.4" stroke="#7e6e5e" stroke-width="1.2" opacity="0.33"/><path d="M882 402l-11.1 15.2" stroke="#30251c" stroke-width="1.0" opacity="0.25"/><path d="M950 494l-13.4 18.8" stroke="#94867a" stroke-width="1.1" opacity="0.39"/><path d="M885 439l-8.1 13.6" stroke="#7e6e5e" stroke-width="0.7" opacity="0.23"/><path d="M898 359l-7.3 13.5" stroke="#a89a88" stroke-width="0.8" opacity="0.41"/><path d="M896 539l-5.1 9.1" stroke="#7e6e5e" stroke-width="1.1" opacity="0.38"/><path d="M1029 499l-10.6 23.9" stroke="#3a2e24" stroke-width="0.9" opacity="0.47"/><path d="M970 438l-6.3 12.6" stroke="#7e6e5e" stroke-width="1.0" opacity="0.41"/><path d="M969 455l-9.4 17.7" stroke="#9a8c7a" stroke-width="1.1" opacity="0.29"/><path d="M1096 381l0.0 11.9" stroke="#3e3026" stroke-width="1.1" opacity="0.26"/><path d="M915 405l-14.9 20.2" stroke="#9a8c7a" stroke-width="0.9" opacity="0.23"/><path d="M984 535l-7.9 13.2" stroke="#8a7c6a" stroke-width="0.8" opacity="0.43"/><path d="M975 452l-11.7 21.8" stroke="#7e6e5e" stroke-width="0.8" opacity="0.34"/><path d="M884 381l-8.4 11.2" stroke="#8a7c6a" stroke-width="1.0" opacity="0.38"/><path d="M896 409l-14.8 23.1" stroke="#30251c" stroke-width="0.9" opacity="0.47"/><path d="M1012 547l-4.8 19.2" stroke="#2a2018" stroke-width="1.1" opacity="0.44"/><path d="M904 363l-11.6 19.3" stroke="#2a2018" stroke-width="1.1" opacity="0.30"/><path d="M1014 354l-6.3 17.1" stroke="#2a2018" stroke-width="1.1" opacity="0.35"/><path d="M902 454l-8.9 13.4" stroke="#7e6e5e" stroke-width="1.0" opacity="0.35"/><path d="M1048 426l-2.1 12.0" stroke="#3e3026" stroke-width="1.3" opacity="0.47"/><path d="M940 514l-12.2 17.1" stroke="#a89a88" stroke-width="1.2" opacity="0.37"/><path d="M899 524l-7.5 10.8" stroke="#30251c" stroke-width="0.9" opacity="0.27"/><path d="M1032 411l-6.6 15.8" stroke="#4a3a2e" stroke-width="1.2" opacity="0.47"/><path d="M972 488l-6.8 11.7" stroke="#2a2018" stroke-width="0.9" opacity="0.37"/><path d="M1001 388l-12.1 24.3" stroke="#7e6e5e" stroke-width="1.3" opacity="0.34"/><path d="M1076 399l0.7 16.3" stroke="#7a6a58" stroke-width="1.2" opacity="0.29"/><path d="M1064 446l-0.9 10.9" stroke="#3e3026" stroke-width="0.8" opacity="0.26"/><path d="M1013 393l-6.6 14.7" stroke="#a89a88" stroke-width="0.8" opacity="0.36"/><path d="M1109 514l-3.0 27.3" stroke="#8a7c6a" stroke-width="0.9" opacity="0.32"/><path d="M883 438l-10.3 13.3" stroke="#94867a" stroke-width="1.2" opacity="0.24"/><path d="M1101 431l-0.0 10.0" stroke="#574636" stroke-width="1.0" opacity="0.35"/><path d="M938 408l-15.2 22.9" stroke="#9a8c7a" stroke-width="1.2" opacity="0.25"/><path d="M1078 354l1.2 15.9" stroke="#3e3026" stroke-width="1.2" opacity="0.26"/><path d="M1006 404l-10.0 14.0" stroke="#7e6e5e" stroke-width="1.1" opacity="0.46"/><path d="M1070 464l1.8 15.8" stroke="#7e6e5e" stroke-width="1.0" opacity="0.23"/><path d="M939 500l-15.4 22.1" stroke="#2a2018" stroke-width="1.3" opacity="0.42"/><path d="M984 443l-13.3 19.6" stroke="#8a7c6a" stroke-width="1.1" opacity="0.27"/><path d="M907 500l-10.9 19.3" stroke="#30251c" stroke-width="0.8" opacity="0.35"/><path d="M958 542l-15.1 23.5" stroke="#9a8c7a" stroke-width="1.1" opacity="0.27"/><path d="M1107 385l-0.4 7.9" stroke="#574636" stroke-width="1.1" opacity="0.35"/><path d="M900 397l-7.6 9.9" stroke="#94867a" stroke-width="0.8" opacity="0.30"/><path d="M995 430l-11.4 18.3" stroke="#7e6e5e" stroke-width="0.7" opacity="0.42"/><path d="M981 395l-17.0 22.0" stroke="#9a8c7a" stroke-width="1.2" opacity="0.44"/><path d="M995 450l-10.0 13.4" stroke="#94867a" stroke-width="1.0" opacity="0.22"/><path d="M970 403l-12.8 16.9" stroke="#94867a" stroke-width="0.8" opacity="0.25"/><path d="M1034 451l-5.2 17.0" stroke="#9a8c7a" stroke-width="0.8" opacity="0.38"/><path d="M1084 549l-4.5 23.2" stroke="#94867a" stroke-width="1.1" opacity="0.29"/><path d="M1095 517l-3.2 25.9" stroke="#3a2e24" stroke-width="0.9" opacity="0.30"/><path d="M1058 475l-0.3 16.0" stroke="#94867a" stroke-width="1.2" opacity="0.37"/><path d="M1112 356l-0.2 12.8" stroke="#574636" stroke-width="0.9" opacity="0.45"/><path d="M891 408l-13.0 17.7" stroke="#9a8c7a" stroke-width="1.2" opacity="0.28"/><path d="M1093 383l0.5 10.3" stroke="#7a6a58" stroke-width="1.1" opacity="0.26"/><path d="M1068 516l-0.7 11.8" stroke="#94867a" stroke-width="1.3" opacity="0.26"/><path d="M985 521l-15.5 22.5" stroke="#7e6e5e" stroke-width="0.7" opacity="0.29"/><path d="M995 539l-6.1 11.4" stroke="#94867a" stroke-width="1.2" opacity="0.40"/><path d="M1055 416l-0.6 7.9" stroke="#4a3a2e" stroke-width="1.0" opacity="0.25"/><path d="M1068 452l1.0 12.5" stroke="#8a7c6a" stroke-width="0.8" opacity="0.46"/><path d="M1070 396l0.7 7.0" stroke="#4a3a2e" stroke-width="1.2" opacity="0.27"/><path d="M982 455l-10.8 22.0" stroke="#a89a88" stroke-width="1.3" opacity="0.30"/><path d="M1040 488l-6.9 24.3" stroke="#2a2018" stroke-width="1.2" opacity="0.38"/><path d="M923 474l-9.9 13.5" stroke="#9a8c7a" stroke-width="1.1" opacity="0.25"/><path d="M1062 505l-2.7 15.3" stroke="#2a2018" stroke-width="1.3" opacity="0.40"/><path d="M1069 459l-3.2 17.7" stroke="#94867a" stroke-width="1.2" opacity="0.26"/><path d="M897 502l-5.8 10.1" stroke="#8a7c6a" stroke-width="0.8" opacity="0.34"/><path d="M892 541l-12.7 17.1" stroke="#94867a" stroke-width="0.9" opacity="0.28"/><path d="M1065 494l-0.6 24.1" stroke="#a89a88" stroke-width="1.2" opacity="0.24"/><path d="M978 409l-6.6 10.2" stroke="#3a2e24" stroke-width="0.9" opacity="0.44"/><path d="M1029 447l-1.9 11.6" stroke="#574636" stroke-width="0.7" opacity="0.34"/><path d="M980 450l-9.9 14.0" stroke="#a89a88" stroke-width="1.0" opacity="0.27"/><path d="M881 528l-11.1 22.4" stroke="#7e6e5e" stroke-width="0.9" opacity="0.25"/><path d="M1029 500l-6.5 25.8" stroke="#2a2018" stroke-width="0.9" opacity="0.25"/><path d="M956 518l-7.0 13.5" stroke="#3a2e24" stroke-width="1.1" opacity="0.38"/><path d="M921 401l-11.7 15.0" stroke="#9a8c7a" stroke-width="0.9" opacity="0.36"/><path d="M996 527l-14.0 21.6" stroke="#9a8c7a" stroke-width="1.0" opacity="0.33"/><path d="M926 512l-13.9 18.5" stroke="#30251c" stroke-width="0.9" opacity="0.27"/><path d="M967 484l-12.0 18.8" stroke="#94867a" stroke-width="0.9" opacity="0.25"/><path d="M896 455l-11.1 17.3" stroke="#94867a" stroke-width="1.1" opacity="0.37"/><path d="M1028 398l-4.3 14.3" stroke="#7a6a58" stroke-width="0.9" opacity="0.30"/><path d="M995 440l-14.3 23.6" stroke="#30251c" stroke-width="1.1" opacity="0.43"/><path d="M893 410l-6.6 9.3" stroke="#3a2e24" stroke-width="1.2" opacity="0.33"/><path d="M1006 458l-6.5 8.6" stroke="#30251c" stroke-width="1.1" opacity="0.32"/><path d="M1095 516l-2.9 15.2" stroke="#7e6e5e" stroke-width="1.1" opacity="0.28"/><path d="M890 448l-5.2 9.3" stroke="#2a2018" stroke-width="0.9" opacity="0.48"/><path d="M942 444l-6.2 11.3" stroke="#7e6e5e" stroke-width="1.2" opacity="0.25"/><path d="M1047 514l-10.0 21.5" stroke="#2a2018" stroke-width="1.3" opacity="0.39"/><path d="M1005 479l-6.6 9.8" stroke="#30251c" stroke-width="1.1" opacity="0.30"/><path d="M882 490l-9.0 15.3" stroke="#7e6e5e" stroke-width="0.9" opacity="0.28"/><path d="M1045 410l-5.4 15.2" stroke="#7a6a58" stroke-width="1.2" opacity="0.48"/><path d="M969 549l-4.7 9.0" stroke="#9a8c7a" stroke-width="1.1" opacity="0.40"/><path d="M1028 481l-5.9 18.0" stroke="#30251c" stroke-width="1.0" opacity="0.23"/><path d="M1060 394l-2.7 12.7" stroke="#7a6a58" stroke-width="1.1" opacity="0.42"/><path d="M1029 440l-3.9 15.8" stroke="#7a6a58" stroke-width="1.0" opacity="0.38"/><path d="M1051 390l-1.0 10.9" stroke="#7a6a58" stroke-width="0.9" opacity="0.41"/><path d="M1015 385l-9.4 21.2" stroke="#a89a88" stroke-width="1.3" opacity="0.30"/><path d="M1058 434l-0.8 15.1" stroke="#7a6a58" stroke-width="0.9" opacity="0.47"/><path d="M1104 353l-1.1 11.1" stroke="#574636" stroke-width="0.9" opacity="0.31"/><path d="M1051 481l-0.5 15.1" stroke="#2a2018" stroke-width="0.8" opacity="0.31"/><path d="M1029 419l-4.2 12.7" stroke="#574636" stroke-width="1.0" opacity="0.32"/><path d="M1001 516l-5.9 9.0" stroke="#2a2018" stroke-width="1.0" opacity="0.34"/><path d="M957 377l-13.2 22.3" stroke="#8a7c6a" stroke-width="0.8" opacity="0.28"/><path d="M938 390l-11.5 15.6" stroke="#3a2e24" stroke-width="0.9" opacity="0.35"/><path d="M1036 389l-4.7 14.1" stroke="#3e3026" stroke-width="0.7" opacity="0.31"/><path d="M900 421l-9.9 15.9" stroke="#a89a88" stroke-width="1.3" opacity="0.38"/><path d="M1001 380l-9.5 13.8" stroke="#7e6e5e" stroke-width="1.0" opacity="0.46"/><path d="M959 430l-15.2 22.6" stroke="#3a2e24" stroke-width="1.2" opacity="0.27"/><path d="M1008 540l-5.7 10.7" stroke="#30251c" stroke-width="1.1" opacity="0.25"/><path d="M1104 371l0.7 16.9" stroke="#7a6a58" stroke-width="1.1" opacity="0.33"/><path d="M1056 359l-1.4 18.7" stroke="#574636" stroke-width="0.9" opacity="0.31"/><path d="M1071 518l-2.0 13.2" stroke="#30251c" stroke-width="1.2" opacity="0.40"/><path d="M979 547l-12.1 24.2" stroke="#8a7c6a" stroke-width="1.0" opacity="0.44"/><path d="M890 376l-10.4 16.5" stroke="#2a2018" stroke-width="0.9" opacity="0.23"/><path d="M1096 405l-1.2 7.4" stroke="#3e3026" stroke-width="0.8" opacity="0.23"/><path d="M1029 486l-4.4 14.2" stroke="#7e6e5e" stroke-width="1.3" opacity="0.22"/><path d="M978 362l-16.7 22.4" stroke="#9a8c7a" stroke-width="0.9" opacity="0.26"/><path d="M1060 385l-1.1 16.8" stroke="#574636" stroke-width="0.9" opacity="0.24"/><path d="M907 537l-9.9 13.2" stroke="#a89a88" stroke-width="1.3" opacity="0.28"/><path d="M884 416l-9.3 12.6" stroke="#94867a" stroke-width="0.8" opacity="0.24"/><path d="M992 526l-10.1 19.4" stroke="#30251c" stroke-width="1.2" opacity="0.30"/><path d="M1051 392l-0.0 14.0" stroke="#3e3026" stroke-width="0.7" opacity="0.36"/><path d="M929 417l-12.8 22.9" stroke="#3a2e24" stroke-width="0.8" opacity="0.41"/><path d="M1054 481l-0.7 24.0" stroke="#a89a88" stroke-width="1.3" opacity="0.39"/><path d="M1034 469l-4.0 18.5" stroke="#9a8c7a" stroke-width="0.8" opacity="0.33"/><path d="M979 437l-11.1 16.7" stroke="#94867a" stroke-width="0.8" opacity="0.29"/><path d="M950 473l-10.1 14.8" stroke="#8a7c6a" stroke-width="0.9" opacity="0.34"/><path d="M1018 424l-6.2 12.9" stroke="#9a8c7a" stroke-width="1.3" opacity="0.29"/><path d="M989 415l-5.1 9.8" stroke="#30251c" stroke-width="1.0" opacity="0.43"/><path d="M1085 532l-3.0 17.7" stroke="#a89a88" stroke-width="1.2" opacity="0.44"/><path d="M1081 373l1.9 14.4" stroke="#3e3026" stroke-width="1.3" opacity="0.33"/><path d="M930 496l-9.3 15.4" stroke="#a89a88" stroke-width="0.8" opacity="0.37"/><path d="M978 400l-13.0 23.3" stroke="#8a7c6a" stroke-width="1.1" opacity="0.33"/><path d="M931 530l-5.9 10.0" stroke="#a89a88" stroke-width="1.1" opacity="0.35"/><path d="M1106 497l1.1 11.1" stroke="#9a8c7a" stroke-width="0.8" opacity="0.33"/><path d="M1026 479l-6.9 14.6" stroke="#8a7c6a" stroke-width="0.9" opacity="0.27"/><path d="M1082 458l1.7 12.6" stroke="#2a2018" stroke-width="0.9" opacity="0.37"/><path d="M945 508l-7.3 10.5" stroke="#3a2e24" stroke-width="0.8" opacity="0.38"/><path d="M1017 440l-5.8 25.1" stroke="#a89a88" stroke-width="0.9" opacity="0.42"/><path d="M974 446l-8.2 15.0" stroke="#9a8c7a" stroke-width="1.0" opacity="0.46"/><path d="M939 548l-9.7 16.9" stroke="#94867a" stroke-width="1.3" opacity="0.43"/><path d="M910 535l-13.2 24.7" stroke="#30251c" stroke-width="0.8" opacity="0.39"/><path d="M1110 506l0.4 14.8" stroke="#94867a" stroke-width="0.8" opacity="0.47"/><path d="M901 372l-8.1 13.0" stroke="#30251c" stroke-width="1.3" opacity="0.43"/><path d="M1064 487l-4.3 22.1" stroke="#8a7c6a" stroke-width="1.0" opacity="0.23"/><path d="M1013 525l-2.9 11.0" stroke="#94867a" stroke-width="0.8" opacity="0.35"/><path d="M1007 513l-8.5 16.1" stroke="#2a2018" stroke-width="0.9" opacity="0.44"/><path d="M907 482l-7.5 14.6" stroke="#2a2018" stroke-width="1.1" opacity="0.41"/><path d="M1103 522l0.8 20.9" stroke="#7e6e5e" stroke-width="0.9" opacity="0.29"/><path d="M900 549l-5.5 9.3" stroke="#7e6e5e" stroke-width="1.0" opacity="0.39"/><path d="M959 404l-9.9 18.8" stroke="#2a2018" stroke-width="0.8" opacity="0.45"/><path d="M906 385l-7.6 12.2" stroke="#3a2e24" stroke-width="0.8" opacity="0.47"/><path d="M978 467l-7.2 10.8" stroke="#8a7c6a" stroke-width="0.7" opacity="0.30"/><path d="M913 472l-14.3 19.4" stroke="#2a2018" stroke-width="1.2" opacity="0.45"/><path d="M1106 452l1.3 12.8" stroke="#a89a88" stroke-width="1.0" opacity="0.30"/><path d="M921 441l-10.5 14.6" stroke="#2a2018" stroke-width="0.9" opacity="0.36"/><path d="M1009 432l-14.7 19.5" stroke="#7e6e5e" stroke-width="1.1" opacity="0.34"/><path d="M1055 369l-0.3 16.5" stroke="#7a6a58" stroke-width="1.1" opacity="0.26"/><path d="M957 525l-6.2 8.3" stroke="#a89a88" stroke-width="1.1" opacity="0.43"/><path d="M1066 528l-2.5 15.5" stroke="#2a2018" stroke-width="1.1" opacity="0.32"/><path d="M960 381l-13.4 21.1" stroke="#9a8c7a" stroke-width="0.9" opacity="0.30"/><path d="M1000 501l-14.4 21.5" stroke="#94867a" stroke-width="1.1" opacity="0.31"/><path d="M1010 469l-10.7 14.6" stroke="#8a7c6a" stroke-width="1.2" opacity="0.30"/><path d="M900 389l-16.7 21.7" stroke="#2a2018" stroke-width="1.0" opacity="0.36"/><path d="M976 463l-5.3 10.4" stroke="#8a7c6a" stroke-width="1.1" opacity="0.47"/><path d="M983 476l-15.3 19.7" stroke="#30251c" stroke-width="0.7" opacity="0.22"/><path d="M935 507l-6.7 10.9" stroke="#a89a88" stroke-width="0.8" opacity="0.36"/><path d="M1091 501l-0.7 17.1" stroke="#2a2018" stroke-width="0.7" opacity="0.44"/><path d="M934 414l-9.6 17.6" stroke="#9a8c7a" stroke-width="0.9" opacity="0.45"/><path d="M1040 441l-2.8 13.8" stroke="#4a3a2e" stroke-width="1.1" opacity="0.47"/><path d="M1045 461l-8.7 17.9" stroke="#3a2e24" stroke-width="1.1" opacity="0.43"/><path d="M967 551l-13.2 17.2" stroke="#8a7c6a" stroke-width="1.0" opacity="0.24"/><path d="M974 397l-11.0 18.8" stroke="#3a2e24" stroke-width="1.2" opacity="0.44"/><path d="M1011 440l-4.1 15.0" stroke="#7e6e5e" stroke-width="1.0" opacity="0.44"/><path d="M1111 394l-0.8 12.4" stroke="#3e3026" stroke-width="1.0" opacity="0.46"/><path d="M1036 392l-3.7 9.3" stroke="#4a3a2e" stroke-width="0.9" opacity="0.29"/><path d="M884 435l-12.7 23.3" stroke="#94867a" stroke-width="1.1" opacity="0.30"/><path d="M1052 489l-1.0 22.8" stroke="#3a2e24" stroke-width="1.2" opacity="0.32"/><path d="M903 541l-8.0 13.6" stroke="#9a8c7a" stroke-width="1.2" opacity="0.43"/><path d="M994 385l-7.2 13.0" stroke="#8a7c6a" stroke-width="0.9" opacity="0.37"/><path d="M1094 428l2.0 16.3" stroke="#7a6a58" stroke-width="1.2" opacity="0.31"/><path d="M951 386l-14.1 23.5" stroke="#8a7c6a" stroke-width="1.0" opacity="0.48"/><path d="M953 394l-11.7 15.0" stroke="#30251c" stroke-width="1.3" opacity="0.36"/><path d="M1104 401l0.9 7.3" stroke="#7a6a58" stroke-width="0.7" opacity="0.36"/><path d="M1046 427l-2.4 14.1" stroke="#7a6a58" stroke-width="0.9" opacity="0.47"/><path d="M940 424l-11.8 16.7" stroke="#3a2e24" stroke-width="0.8" opacity="0.46"/><path d="M897 491l-9.6 13.1" stroke="#8a7c6a" stroke-width="1.1" opacity="0.42"/><path d="M1078 441l-1.5 9.9" stroke="#7a6a58" stroke-width="1.3" opacity="0.41"/><path d="M1037 520l-4.8 16.7" stroke="#30251c" stroke-width="0.8" opacity="0.47"/><path d="M1007 523l-5.3 9.7" stroke="#3a2e24" stroke-width="0.9" opacity="0.33"/><path d="M1078 410l0.3 9.4" stroke="#3e3026" stroke-width="0.9" opacity="0.43"/><path d="M1082 528l-2.7 12.9" stroke="#9a8c7a" stroke-width="1.1" opacity="0.31"/><path d="M884 437l-7.3 12.2" stroke="#3a2e24" stroke-width="0.8" opacity="0.24"/><path d="M1043 372l-3.0 9.3" stroke="#7a6a58" stroke-width="1.0" opacity="0.48"/><path d="M1099 511l-2.8 18.3" stroke="#94867a" stroke-width="1.2" opacity="0.27"/><path d="M904 477l-8.2 16.2" stroke="#8a7c6a" stroke-width="0.7" opacity="0.28"/><path d="M1066 522l0.3 11.5" stroke="#94867a" stroke-width="1.0" opacity="0.34"/><path d="M1040 473l-6.8 16.3" stroke="#3a2e24" stroke-width="0.9" opacity="0.24"/><path d="M1020 531l-4.3 12.2" stroke="#30251c" stroke-width="0.8" opacity="0.40"/><path d="M1114 429l-1.1 18.8" stroke="#3e3026" stroke-width="0.8" opacity="0.44"/><path d="M957 364l-7.1 9.8" stroke="#3a2e24" stroke-width="1.1" opacity="0.46"/><path d="M1037 350l-3.4 7.1" stroke="#3e3026" stroke-width="0.7" opacity="0.36"/><path d="M1028 391l-5.7 16.9" stroke="#7a6a58" stroke-width="1.1" opacity="0.27"/><path d="M1098 391l2.2 18.2" stroke="#4a3a2e" stroke-width="0.7" opacity="0.30"/><path d="M1023 513l-2.5 11.7" stroke="#94867a" stroke-width="1.3" opacity="0.44"/><path d="M1055 422l-3.6 17.2" stroke="#3e3026" stroke-width="1.1" opacity="0.26"/><path d="M1075 494l-0.2 18.4" stroke="#3a2e24" stroke-width="0.7" opacity="0.31"/><path d="M962 364l-12.6 24.6" stroke="#9a8c7a" stroke-width="1.0" opacity="0.44"/><path d="M1065 447l-3.1 17.3" stroke="#7a6a58" stroke-width="0.7" opacity="0.24"/><path d="M1077 518l-2.5 19.1" stroke="#30251c" stroke-width="0.8" opacity="0.30"/><path d="M880 549l-8.4 15.3" stroke="#a89a88" stroke-width="1.3" opacity="0.42"/><path d="M1097 545l0.6 11.5" stroke="#30251c" stroke-width="0.8" opacity="0.48"/><path d="M972 524l-8.1 14.0" stroke="#3a2e24" stroke-width="0.8" opacity="0.30"/><path d="M882 391l-16.1 22.5" stroke="#3a2e24" stroke-width="1.1" opacity="0.45"/><path d="M952 521l-12.0 19.9" stroke="#94867a" stroke-width="1.3" opacity="0.32"/><path d="M886 430 Q895 470 941 505 Q990 530 1045 550 L1090 553" fill="none" stroke="#1c140e" stroke-width="14" opacity=".6" filter="url(#b4)"/></g><path d="M1034 456 Q1060 470 1098 464 Q1098 482 1074 492 Q1046 488 1034 456Z" fill="#4e3228" opacity=".9" filter="url(#b2)"/><path d="M1040 455 Q1062 449 1088 442.5 Q1100 440 1105 442 Q1106 450 1099 455.5 Q1082 462 1064 460 Q1050 458 1040 455Z" fill="#9e7872"/><path d="M1028 453.5 Q1060 444 1088 437 Q1102 433 1110 436.5 Q1111 442 1106 444 Q1098 441.5 1088 444 Q1060 451.5 1036 456Z" fill="#2a1410"/><path d="M1074 439 Q1096 429 1112 434.5 Q1106 440 1088 440.5Z" fill="#643a34" opacity=".9"/><path d="M1060 455.5 Q1082 456 1100 448" fill="none" stroke="#d0b0a8" stroke-width="2" opacity=".75" filter="url(#b1)"/><path d="M1044 459 Q1070 468 1100 457" fill="none" stroke="#3e2620" stroke-width="2.4" opacity=".7" filter="url(#b1)"/><ellipse cx="1100" cy="386" rx="30" ry="16" fill="#8e5c4a" opacity=".9" filter="url(#b4)"/><ellipse cx="1084" cy="382" rx="14" ry="6" fill="#b07c68" opacity=".75" filter="url(#b2)"/><ellipse cx="1118" cy="378" rx="8" ry="12" fill="#9c6a56" opacity=".6" filter="url(#b4)"/><path d="M1064 384 Q1060 396 1068 402 Q1090 404 1112 408 Q1124 412 1130 410" fill="none" stroke="#2c1810" stroke-width="3" opacity=".75" filter="url(#b1)"/><path d="M1062 386 Q1050 404 1030 426" fill="none" stroke="#2c1810" stroke-width="2.4" opacity=".6" filter="url(#b1)"/><circle cx="1055" cy="404" r="2.2" fill="#2a140e" opacity=".8"/><path d="M1112 332 Q1106 352 1116 372" fill="none" stroke="#3a2016" stroke-width="8" opacity=".45" filter="url(#b4)"/><path d="M1004 312 Q1028 292 1055 291 Q1074 292 1084 304" fill="none" stroke="#8a5e4c" stroke-width="7" opacity=".55" filter="url(#b4)" transform="translate(0 -9)"/><path d="M1012 319 Q1032 308 1060 306 Q1076 308 1084 315 L1078 323 Q1050 325 1016 324Z" fill="#160c08" opacity=".75" filter="url(#b2)"/><path d="M1007 309 Q1030 293 1055 293 Q1072 294 1081 303" fill="none" stroke="#2a2018" stroke-width="6.5" opacity=".85" filter="url(#b2)"/><path d="M1018 301 Q1036 293 1056 294" fill="none" stroke="#5a5048" stroke-width="2.5" opacity=".6" filter="url(#b1)"/><path d="M1011 324 Q1028 317 1050 325.5 Q1036 331 1016 328.5Z" fill="#140a06"/><path d="M1015.5 324 L1028 321.5 L1028 327.5 L1018 328Z" fill="#d8c8bc"/><ellipse cx="1035" cy="323.5" rx="5" ry="3.6" fill="#2e2216"/><path d="M1006 333 Q1030 343 1052 331" fill="none" stroke="#2a1810" stroke-width="2.6" opacity=".5" filter="url(#b1)"/><ellipse cx="1028" cy="338" rx="20" ry="7" fill="#94665a" opacity=".6" filter="url(#b2)"/><path d="M1004 346 Q1026 352 1046 342" fill="none" stroke="#3a2218" stroke-width="2" opacity=".5" filter="url(#b1)"/><path d="M1097 270 Q1089 296 1097 318" fill="none" stroke="#2a1810" stroke-width="3.5" opacity=".6" filter="url(#b2)"/><path d="M1106 272 Q1100 296 1106 314" fill="none" stroke="#94665a" stroke-width="4" opacity=".55" filter="url(#b2)"/><path d="M1084 282 Q1078 296 1084 308" fill="none" stroke="#3a2218" stroke-width="2.5" opacity=".5" filter="url(#b2)"/><ellipse cx="1085" cy="330" rx="9" ry="7" fill="#b48472" opacity=".8" filter="url(#b2)"/><path d="M1098 318 Q1114 308 1133 300" fill="none" stroke="#1a0e0a" stroke-width="6" opacity=".7" filter="url(#b2)"/><ellipse cx="1109" cy="328" rx="11" ry="6.5" fill="#0e0804" opacity=".9" filter="url(#b2)" transform="rotate(-20 1109 328)"/></g></svg><svg class="a" style="left:730px;top:606px" width="500" height="60" viewBox="730 606 500 60">
<defs>
<linearGradient id="gb" x1="748" y1="0" x2="1213" y2="0" gradientUnits="userSpaceOnUse"><stop offset="0" stop-color="#8c0e50"/><stop offset=".16" stop-color="#7c0a3c"/><stop offset=".30" stop-color="#640614"/><stop offset=".36" stop-color="#5a0500"/><stop offset="1" stop-color="#5a0500"/></linearGradient>
<filter id="gl" x="-5%" y="-30%" width="110%" height="160%"><feGaussianBlur stdDeviation="2.6"/></filter>
</defs>
<path d="M760.5 618.4 L1202.6 618.4 L1213.4 662 L747.6 662 Z" fill="none" stroke="#c01878" stroke-width="5" filter="url(#gl)" opacity=".6"/>
<path d="M760.5 618.4 L1202.6 618.4 L1213.4 662 L747.6 662 Z" fill="url(#gb)"/>
<g stroke="#a8246c" stroke-width="1" fill="none" opacity=".3">
<path d="M770 626 L800 626 L812 638 M785 622 L830 622 L850 642 L880 642 M760 650 L790 650 L800 660 M820 620 L860 660 M840 620 L875 655 M880 622 L905 647"/>
</g>
<path d="M760.5 618.9 L1202.3 618.9 L1213 661" fill="none" stroke="#902038" stroke-width="1"/>
<path d="M760.5 618.9 L748 661" fill="none" stroke="#b01860" stroke-width="1.1"/>
<rect x="933" y="636" width="37.5" height="16" rx="2" fill="#4a0410" stroke="#6a0c1c" stroke-width=".8"/>
<rect x="1008.8" y="636" width="90.4" height="16" rx="2" fill="#4a0410" stroke="#6a0c1c" stroke-width=".8"/>
<rect x="1149" y="636" width="43.6" height="16" rx="2" fill="#4a0410" stroke="#6a0c1c" stroke-width=".8"/>
</svg><span class="t" style="left:764.50px;top:635.60px;font-size:13px;line-height:17px;color:#fbe8f0;letter-spacing:-0.208px;font-weight:bold;-webkit-text-stroke:0.5px #fbe8f0;transform:scaleY(1.75);transform-origin:0 77%;">GLview</span><span class="t" style="left:815.00px;top:628.73px;font-size:8px;line-height:10px;color:#fbe8f0;letter-spacing:-0.042px;font-weight:bold;transform:scaleY(1.3);transform-origin:0 77%;">3.0</span><span class="t" style="left:822.50px;top:640.70px;font-size:7.5px;line-height:10px;color:#fff;letter-spacing:-0.359px;font-weight:bold;">by Realtech-VR</span><span class="t" style="left:910.10px;top:635.03px;font-size:10px;line-height:13px;color:#9c9292;letter-spacing:-0.025px;font-family:&quot;DejaVu Sans&quot;,&quot;Liberation Sans&quot;,sans-serif;">FPS:</span><span class="t" style="left:947.70px;top:635.03px;font-size:10px;line-height:13px;color:#b8288a;letter-spacing:-0.267px;font-family:&quot;DejaVu Sans&quot;,&quot;Liberation Sans&quot;,sans-serif;">27</span><span class="t" style="left:977.80px;top:635.03px;font-size:10px;line-height:13px;color:#9c9292;letter-spacing:0.109px;font-family:&quot;DejaVu Sans&quot;,&quot;Liberation Sans&quot;,sans-serif;">TEST:</span><span class="t" style="left:1010.30px;top:635.03px;font-size:10px;line-height:13px;color:#b8288a;letter-spacing:-0.122px;font-family:&quot;DejaVu Sans&quot;,&quot;Liberation Sans&quot;,sans-serif;word-spacing:2px;">OpenGL 4.3</span><span class="t" style="left:1110.80px;top:635.03px;font-size:10px;line-height:13px;color:#9c9292;letter-spacing:-0.209px;font-family:&quot;DejaVu Sans&quot;,&quot;Liberation Sans&quot;,sans-serif;">FRAME:</span><span class="t" style="left:1150.80px;top:635.03px;font-size:10px;line-height:13px;color:#b8288a;letter-spacing:-0.198px;font-family:&quot;DejaVu Sans&quot;,&quot;Liberation Sans&quot;,sans-serif;">158</span>
<div class="a" style="left:7px;top:34px;width:559px;height:512px;background:#f7f3f7;border:1px solid #3f3f3f;border-radius:0 5px 0 0;box-shadow:inset 0 0 0 1px #e6eef8"></div><div class="a" style="left:8px;top:35px;width:557px;height:24px;background:linear-gradient(#f4f8fc 0,#c8d6e6 2px,#d2deec 10px,#dfe9f5 100%);border-radius:0 4px 0 0"></div><span class="t" style="left:11.00px;top:39.84px;font-size:12px;line-height:16px;color:#3c3c50;letter-spacing:0.007px;">System Information</span><div class="a" style="left:530px;top:39px;width:29px;height:17px;border:1px solid #8a96b0;border-radius:3px;background:linear-gradient(#e8eff8,#d4e0ee 50%,#c8d6e8 51%,#d8e4f2)"></div><svg class="a" style="left:538px;top:42px" width="13" height="11" viewBox="0 0 13 11"><path d="M2.4 1.8 L10.6 9.2 M10.6 1.8 L2.4 9.2" stroke="#4c4c50" stroke-width="4.6" stroke-linecap="square"/><path d="M2.4 1.8 L10.6 9.2 M10.6 1.8 L2.4 9.2" stroke="#f6f6f6" stroke-width="2.6" stroke-linecap="square"/></svg><svg class="a" style="left:18px;top:70px" width="33" height="33" viewBox="0 0 33 33">
<defs><linearGradient id="gi" x1="0" y1="0" x2="0" y2="1"><stop offset="0" stop-color="#a4e000"/><stop offset="1" stop-color="#58b000"/></linearGradient></defs>
<rect x="0.8" y="0.8" width="31" height="31" rx="3" fill="#777"/>
<rect x="0.5" y="0.5" width="30" height="30" rx="2.5" fill="#050505"/>
<circle cx="15.5" cy="15.5" r="10.3" fill="none" stroke="url(#gi)" stroke-width="3.8"/>
<circle cx="15.2" cy="9.2" r="2.4" fill="#9ee000"/>
<path d="M12.2 13.4 L17.4 12.4 L17.4 21.4 L19.2 22.4 L19.2 23.6 L12 23.6 L12 22.4 L13.8 21.4 L13.8 14.8 L12.2 14.4 Z" fill="url(#gi)"/>
</svg><span class="t" style="left:57.00px;top:69.69px;font-size:11px;line-height:14px;color:#000;letter-spacing:-0.044px;">Detailed information about your NVIDIA hardware and the system it’s running on.</span><div class="a" style="left:18px;top:134px;width:533px;height:363px;border:1px solid #8c8e94;background:#f7f3f7"></div><div class="a" style="left:67px;top:116px;width:69px;height:19px;border:1px solid #8c8e94;border-left:none;background:linear-gradient(#f2f2f2 0,#ebebeb 48%,#dddddd 52%,#d2d2d2 100%)"></div><div class="a" style="left:18px;top:114px;width:50px;height:21px;border:1px solid #8c8e94;border-bottom:none;background:#fdfcfd"></div><div class="a" style="left:19px;top:132px;width:48px;height:4px;background:linear-gradient(#fdfcfd,#f7f3f7)"></div><span class="t" style="left:25.00px;top:117.19px;font-size:11px;line-height:14px;color:#000;letter-spacing:-0.225px;">Display</span><span class="t" style="left:71.50px;top:119.19px;font-size:11px;line-height:14px;color:#000;letter-spacing:-0.237px;">Components</span><span class="t" style="left:32.00px;top:147.19px;font-size:11px;line-height:14px;color:#000;letter-spacing:-0.092px;">System information</span><div class="hr" style="left:133px;top:154px;width:403px"></div><span class="t" style="left:47.10px;top:164.69px;font-size:11px;line-height:14px;color:#000;letter-spacing:-0.022px;">Operating system:</span><span class="t" style="left:176.50px;top:164.69px;font-size:11px;line-height:14px;color:#000;letter-spacing:-0.119px;">Windows 7 Enterprise, 64-bit (Service Pack 1)</span><span class="t" style="left:47.10px;top:195.69px;font-size:11px;line-height:14px;color:#000;letter-spacing:-0.103px;">DirectX runtime version:</span><span class="t" style="left:177.00px;top:195.69px;font-size:11px;line-height:14px;color:#000;letter-spacing:0.227px;">11.0</span><span class="t" style="left:32.00px;top:224.69px;font-size:11px;line-height:14px;color:#000;letter-spacing:-0.138px;">Graphics card information</span><div class="hr" style="left:164px;top:232px;width:372px"></div><div class="a" style="left:33px;top:251px;width:504px;height:193px;border:1px solid #d5dfe9;border-radius:3px;background:#fff"></div><div class="a" style="left:34px;top:252px;width:502px;height:17px;background:linear-gradient(#fbf9fb,#f6f3f6);border-radius:2px 2px 0 0"></div><div class="a" style="left:34px;top:269px;width:502px;height:1px;background:#d5dfe9"></div><div class="a" style="left:226px;top:270px;width:5px;height:173px;background:#f2eef2"></div><span class="t" style="left:35.00px;top:253.19px;font-size:11px;line-height:14px;color:#000;letter-spacing:0.119px;">Items</span><span class="t" style="left:233.50px;top:253.19px;font-size:11px;line-height:14px;color:#000;letter-spacing:-0.232px;">Details</span><span class="t" style="left:39.00px;top:273.19px;font-size:11px;line-height:14px;color:#000;letter-spacing:-0.381px;">GRID K280Q</span><span class="t" style="left:235.80px;top:273.19px;font-size:11px;line-height:14px;color:#000;letter-spacing:0.036px;">Driver version:</span><span class="t" style="left:371.70px;top:273.19px;font-size:11px;line-height:14px;color:#000;letter-spacing:0.057px;">347.10</span><span class="t" style="left:235.80px;top:290.19px;font-size:11px;line-height:14px;color:#000;letter-spacing:-0.052px;">Direct3D API version:</span><span class="t" style="left:371.70px;top:290.19px;font-size:11px;line-height:14px;color:#000;letter-spacing:0.339px;">11</span><span class="t" style="left:235.80px;top:307.19px;font-size:11px;line-height:14px;color:#000;letter-spacing:0.007px;">Direct3D feature level:</span><span class="t" style="left:371.70px;top:307.19px;font-size:11px;line-height:14px;color:#000;letter-spacing:0.036px;">11_0</span><span class="t" style="left:235.80px;top:324.19px;font-size:11px;line-height:14px;color:#000;letter-spacing:-0.280px;">CUDA Cores:</span><span class="t" style="left:371.70px;top:324.19px;font-size:11px;line-height:14px;color:#000;letter-spacing:-0.171px;">1536</span><span class="t" style="left:235.80px;top:341.19px;font-size:11px;line-height:14px;color:#000;letter-spacing:-0.250px;">Graphics clock:</span><span class="t" style="left:371.70px;top:341.19px;font-size:11px;line-height:14px;color:#000;letter-spacing:-0.419px;">745 MHz</span><span class="t" style="left:235.80px;top:358.19px;font-size:11px;line-height:14px;color:#000;letter-spacing:0.055px;">Memory data rate:</span><span class="t" style="left:371.70px;top:358.19px;font-size:11px;line-height:14px;color:#000;letter-spacing:-0.393px;">5000 MHz</span><span class="t" style="left:235.80px;top:375.19px;font-size:11px;line-height:14px;color:#000;letter-spacing:0.025px;">Memory interface:</span><span class="t" style="left:371.70px;top:375.19px;font-size:11px;line-height:14px;color:#000;letter-spacing:0.108px;">256-bit</span><span class="t" style="left:235.80px;top:392.19px;font-size:11px;line-height:14px;color:#000;letter-spacing:-0.032px;">Memory bandwidth:</span><span class="t" style="left:371.70px;top:392.19px;font-size:11px;line-height:14px;color:#000;letter-spacing:-0.169px;">160.00 GB/s</span><span class="t" style="left:235.80px;top:409.19px;font-size:11px;line-height:14px;color:#000;letter-spacing:0.011px;">Total available graphics ...</span><span class="t" style="left:371.70px;top:409.19px;font-size:11px;line-height:14px;color:#000;letter-spacing:-0.433px;">4543 MB</span><div class="a" style="left:520px;top:270px;width:16px;height:156px;background:#f1eff1"></div><div class="a" style="left:520px;top:289px;width:16px;height:66px;border:1px solid #959595;border-radius:2px;background:linear-gradient(90deg,#f4f4f4 0,#e9e9e9 45%,#d6d6d6 50%,#cdcdcd 100%);box-shadow:inset 0 0 0 1px #fbfbfb"></div><div class="a" style="left:524px;top:318px;width:8px;height:1px;background:#6a6a6a"></div><div class="a" style="left:524px;top:320px;width:8px;height:1px;background:#6a6a6a"></div><div class="a" style="left:524px;top:322px;width:8px;height:1px;background:#6a6a6a"></div><div class="a" style="left:524px;top:324px;width:8px;height:1px;background:#6a6a6a"></div><svg class="a" style="left:524px;top:276px" width="9" height="6" viewBox="0 0 9 6"><path d="M0.5 5.5 L4.5 1 L8.5 5.5 Z" fill="#444"/></svg><svg class="a" style="left:525px;top:415px" width="7" height="4" viewBox="0 0 7 4"><path d="M0 0 L7 0 L3.5 3.6 Z" fill="#444"/></svg><div class="a" style="left:231px;top:426px;width:289px;height:17px;background:#f1eff1"></div><div class="a" style="left:520px;top:426px;width:16px;height:17px;background:#f1eff1"></div><div class="a" style="left:249px;top:427px;width:238px;height:15px;border:1px solid #959595;border-radius:2px;background:linear-gradient(#f4f4f4 0,#e9e9e9 45%,#d6d6d6 50%,#cdcdcd 100%);box-shadow:inset 0 0 0 1px #fbfbfb"></div><div class="a" style="left:365px;top:431px;width:1px;height:6px;background:#555"></div><div class="a" style="left:367px;top:431px;width:1px;height:6px;background:#555"></div><div class="a" style="left:369px;top:431px;width:1px;height:6px;background:#555"></div><svg class="a" style="left:236px;top:430px" width="5" height="8" viewBox="0 0 5 8"><path d="M4.5 0.5 L4.5 7.5 L0.5 4 Z" fill="#333"/></svg><svg class="a" style="left:508px;top:430px" width="5" height="8" viewBox="0 0 5 8"><path d="M0.5 0.5 L0.5 7.5 L4.5 4 Z" fill="#333"/></svg><div class="btn" style="left:464px;top:451px;width:73px;height:21px"></div><span class="t" style="left:485.00px;top:454.69px;font-size:11px;line-height:14px;color:#000;letter-spacing:0.150px;">About</span><div class="btn" style="left:398px;top:510px;width:73px;height:21px"></div><span class="t" style="left:421.00px;top:513.69px;font-size:11px;line-height:14px;color:#000;letter-spacing:-0.145px;">Save</span><div class="btn" style="left:479px;top:510px;width:73px;height:21px"></div><span class="t" style="left:501.00px;top:513.69px;font-size:11px;line-height:14px;color:#000;letter-spacing:-0.325px;">Close</span>
<div class="a" style="left:7px;top:660px;width:1265px;height:40px;background:linear-gradient(90deg,#8b9bb3 0,#8b9bb3 52px,#a5c1e0 82px,#a5c1e0 1066px,#8a9db7 1090px,#8a9db7 100%)"></div><div class="a" style="left:7px;top:660px;width:1265px;height:1px;background:#2c3646"></div><div class="a" style="left:7px;top:661px;width:1265px;height:1px;background:rgba(255,255,255,.45)"></div><svg class="a" style="left:15px;top:660px" width="40" height="40" viewBox="0 0 40 40">
<defs>
<radialGradient id="ob" cx="50%" cy="88%" r="75%"><stop offset="0" stop-color="#3ed8ff"/><stop offset=".35" stop-color="#0a7cc0"/><stop offset=".75" stop-color="#0e4f88"/><stop offset="1" stop-color="#2a5f92"/></radialGradient>
<linearGradient id="og" x1="0" y1="0" x2="0" y2="1"><stop offset="0" stop-color="#dfe8f2" stop-opacity=".85"/><stop offset="1" stop-color="#9fb8d4" stop-opacity=".35"/></linearGradient>
</defs>
<circle cx="20.2" cy="19.8" r="17.8" fill="url(#ob)" stroke="#1d4a78" stroke-width="1"/>
<path d="M3.6 17 A16.8 16.8 0 0 1 36.8 17 Q20 23 3.6 17Z" fill="url(#og)"/>
<g transform="translate(20.2 18.6) scale(1.18) rotate(3) translate(-19.3 -18.3)"><path d="M12.3 8.6 Q16 6.8 19.6 8.4 L18.2 16.6 Q14.6 15.2 10.8 16.8Z" fill="#e8582a"/>
<path d="M21.2 9.2 Q25 11.4 29.6 9.6 L28 17.6 Q23.6 19.4 19.8 17.2Z" fill="#86b83a"/>
<path d="M10.4 18.6 Q14.2 17 17.8 18.4 L16.2 26.8 Q12.8 25.2 8.6 27Z" fill="#3a9ae0"/>
<path d="M19.4 19.2 Q23.2 21.4 27.6 19.6 L26 27.8 Q21.8 29.6 17.8 27.4Z" fill="#f8b62a"/></g>
</svg><svg class="a" style="left:80px;top:662px" width="36" height="36" viewBox="0 0 36 36">
<defs><linearGradient id="ie" x1="0" y1="0" x2="0" y2="1"><stop offset="0" stop-color="#6fd6fa"/><stop offset=".5" stop-color="#36aeea"/><stop offset="1" stop-color="#1a86d4"/></linearGradient></defs>
<path d="M18 5.2 C25.6 5.2 31 10.6 31 18.4 L31 20.2 L12.4 20.2 C12.8 23.6 15 25.6 18.4 25.6 C20.8 25.6 22.6 24.6 23.6 22.8 L30.2 22.8 C28.6 27.8 24 31 18.2 31 C10.6 31 5.2 25.6 5.2 18.2 C5.2 10.6 10.6 5.2 18 5.2 Z M12.5 15.4 L24.2 15.4 C23.8 12.4 21.6 10.4 18.4 10.4 C15.2 10.4 13 12.4 12.5 15.4 Z" fill="url(#ie)" stroke="#1878c0" stroke-width=".7"/>
<path d="M4.4 31.4 C-0.4 27 8 12 20 6 C26 3 31.6 2.6 31.4 7.6 C30.4 4.6 25 6 20.4 8.6 C10 14.4 3.4 25.6 6.6 30.6 Z" fill="#f6c01e" stroke="#e8a400" stroke-width=".5"/>
</svg><svg class="a" style="left:142px;top:666px" width="35" height="31" viewBox="0 0 35 31">
<defs><linearGradient id="fo" x1="0" y1="0" x2="0" y2="1"><stop offset="0" stop-color="#fbeeb0"/><stop offset="1" stop-color="#f2d478"/></linearGradient>
<linearGradient id="fs" x1="0" y1="0" x2="0" y2="1"><stop offset="0" stop-color="#bfe6fa"/><stop offset="1" stop-color="#58aee4"/></linearGradient></defs>
<path d="M1.2 27 L1.2 2.6 Q1.2 1.4 2.4 1.4 L13.6 1.4 L15 3.2 L21.6 3.2 L23 5.2 L31.4 5.2 Q32.6 5.2 32.6 6.4 L32.6 27 Z" fill="#ecd07c" stroke="#d2b058" stroke-width=".8"/>
<rect x="4.2" y="2.4" width="8.6" height="2.2" fill="#fff"/><rect x="4.2" y="2.4" width="3" height="2.2" fill="#18a838"/>
<rect x="12.4" y="4.2" width="8.6" height="2.2" fill="#fff"/><rect x="12.4" y="4.2" width="3" height="2.2" fill="#d83020"/>
<rect x="20.6" y="6.2" width="9" height="2.2" fill="#fff"/><rect x="20.6" y="6.2" width="3" height="2.2" fill="#2898e8"/>
<path d="M1.2 8.6 L18 8.6 L19.2 9.4 L32.6 9.4 L32.6 27 L1.2 27 Z" fill="url(#fo)" stroke="#d6b458" stroke-width=".6"/>
<path d="M1.2 6.4 L9.6 6.4 L11 8.6 L1.2 8.6Z M11 8.6 L12 6.6 L18.6 6.6 L19.2 9.4" fill="#f6e29c" stroke="#d6b458" stroke-width=".5"/>
<path d="M5.4 18.4 Q5.4 16.8 7 16.8 L27 16.8 Q28.6 16.8 28.6 18.4 L28.6 29.4 L22.6 29.4 L22.6 22.4 L11.4 22.4 L11.4 29.4 L5.4 29.4 Z" fill="url(#fs)" stroke="#4aa0dc" stroke-width=".8" opacity=".95"/>
<circle cx="8.6" cy="18.6" r="1.8" fill="#fff" opacity=".9"/>
</svg><svg class="a" style="left:205px;top:667px" width="32" height="29" viewBox="0 0 32 29">
<defs><radialGradient id="wo" cx="40%" cy="35%" r="70%"><stop offset="0" stop-color="#ffa040"/><stop offset="1" stop-color="#f06c10"/></radialGradient></defs>
<path d="M23 2.4 L27.6 3.4 L27.6 24.4 L23 26.4 Z" fill="#cfe4f4" stroke="#84b4d8" stroke-width=".6"/>
<path d="M21.6 2.2 L25.6 3 L25.6 25 L21.6 26.6 Z" fill="#d8eaf6" stroke="#84b4d8" stroke-width=".6"/>
<path d="M2 2 L23.6 2 L23.6 26.6 L2 24.4 Z" fill="#a6cdea" stroke="#78acd4" stroke-width=".8"/>
<circle cx="13" cy="13.8" r="8.9" fill="url(#wo)"/>
<path d="M9.6 8.4 L19.6 13.8 L9.6 19.2 Z" fill="#fff"/>
</svg><div class="a" style="left:308px;top:661px;width:5px;height:39px;border:1px solid #5b6d86;border-top:none;border-radius:0 0 3px 3px;background:linear-gradient(#dfe8f4 0,#d0dcee 45%,#bfd0e6 50%,#c9d8ec 100%);box-shadow:inset 0 0 0 1px rgba(255,255,255,.8)"></div><div class="a" style="left:253px;top:661px;width:55px;height:39px;border:1px solid #5b6d86;border-top:none;border-radius:0 0 3px 3px;background:linear-gradient(#dfe8f4 0,#d0dcee 45%,#bfd0e6 50%,#c9d8ec 100%);box-shadow:inset 0 0 0 1px rgba(255,255,255,.8)"></div><svg class="a" style="left:263px;top:663px" width="34" height="34" viewBox="0 0 34 34">
<defs><linearGradient id="gv" x1="0" y1="0" x2="1" y2="1"><stop offset="0" stop-color="#d81060"/><stop offset=".5" stop-color="#b80840"/><stop offset="1" stop-color="#a00428"/></linearGradient></defs>
<rect x="1.7" y="1.6" width="30.6" height="30.8" rx="5.5" fill="url(#gv)" stroke="#e8108a" stroke-width="1.4"/>
<path d="M9 2 L16 2 L7 14 L2 14 Z M20 2 L25 2 L16 14 L12 14Z" fill="#e83090" opacity=".35"/>
<text x="4.4" y="18.9" font-family="Liberation Sans,sans-serif" font-weight="bold" font-size="9.6" fill="#fff" stroke="#fff" stroke-width=".3" textLength="26.6" lengthAdjust="spacingAndGlyphs" transform="translate(0 18.9) scale(1 1.42) translate(0 -18.9)">GLview</text>
<rect x="5" y="20.2" width="25" height="1.6" fill="#f6a0c8" opacity=".75"/>
<ellipse cx="17.6" cy="27" rx="6" ry="3" fill="none" stroke="#fff" stroke-width="1.2"/>
<rect x="18.6" y="25.8" width="6.4" height="2.4" fill="#fff" opacity=".85"/>
</svg><div class="a" style="left:315px;top:661px;width:60px;height:39px;border:1px solid #5b6d86;border-top:none;border-radius:0 0 3px 3px;background:linear-gradient(#dfe8f4 0,#d0dcee 45%,#bfd0e6 50%,#c9d8ec 100%);box-shadow:inset 0 0 0 1px rgba(255,255,255,.8)"></div><svg class="a" style="left:329px;top:664px" width="33" height="33" viewBox="0 0 33 33">
<defs><clipPath id="nvl"><rect x="0" y="0" width="13" height="20"/></clipPath><clipPath id="nvr"><rect x="13" y="2.8" width="14" height="14.3"/></clipPath>
<linearGradient id="nvg" x1="0" y1="0" x2="0" y2="1"><stop offset="0" stop-color="#b2e63a"/><stop offset="1" stop-color="#74be00"/></linearGradient></defs>
<rect x="1.2" y="1.2" width="30.6" height="30.6" rx="3.5" fill="#8a8e94"/>
<rect x=".5" y=".5" width="30.4" height="30.4" rx="3.2" fill="#050505" stroke="#5c6066" stroke-width=".8"/>
<rect x="13" y="2.8" width="14" height="14.3" fill="url(#nvg)"/>
<g fill="none" stroke="#84c80c" stroke-width="1.7" clip-path="url(#nvl)">
<path d="M4.6 9.2 Q11 2.6 19 4.6 Q23 6.4 24.6 9.6 Q19 16.4 12.6 15.4 Q7.4 13.8 4.6 9.2Z"/>
<path d="M8.8 9.4 Q12.6 5.6 17 7 Q19.6 8.2 20.4 10 Q17 13.6 13 12.6 Q10.2 11.6 8.8 9.4Z"/>
</g>
<g fill="none" stroke="#141a04" stroke-width="1.7" clip-path="url(#nvr)">
<path d="M4.6 9.2 Q11 2.6 19 4.6 Q23 6.4 24.6 9.6 Q19 16.4 12.6 15.4 Q7.4 13.8 4.6 9.2Z"/>
<path d="M8.8 9.4 Q12.6 5.6 17 7 Q19.6 8.2 20.4 10 Q17 13.6 13 12.6 Q10.2 11.6 8.8 9.4Z"/>
<path d="M13 15.6 Q20 16.2 25.4 11.4" stroke-width="1.4"/>
</g>
<path d="M13 7.4 L13 12.4 L16.4 9.8Z" fill="#8ed010"/>
<rect x="2.8" y="20" width="25.2" height="8" rx="3.6" fill="#c8ccc8" stroke="#e4e4e4" stroke-width=".8"/>
<rect x="3.8" y="21" width="11.6" height="6" rx="2.8" fill="#3c3c3c"/>
<rect x="8.4" y="21.4" width="8" height="5.2" rx="2.2" fill="#ececec" stroke="#9a9a9a" stroke-width=".5"/>
<path d="M9.6 24 L15.4 24" stroke="#b0b0b0" stroke-width=".7"/>
<rect x="18.4" y="20.6" width="9.2" height="6.8" rx="3" fill="#c4d2a8"/>
<circle cx="23" cy="24" r="2.2" fill="#b8dc90" stroke="#38a018" stroke-width="1.3"/>
</svg><svg class="a" style="left:1093px;top:677px" width="12" height="8" viewBox="0 0 12 8"><path d="M1.2 7.2 L5.6 1.8 L10 7.2Z" fill="#46566c" opacity=".7"/><path d="M1.4 6.4 L5.6 1.2 L9.8 6.4Z" fill="#fff"/></svg><svg class="a" style="left:1113px;top:672px" width="20" height="18" viewBox="0 0 20 18">
<path d="M3.3 2.2 L3.3 16.2" stroke="#3c4a5c" stroke-width="3.2" stroke-linecap="round"/>
<path d="M3.3 2.2 L3.3 16.2" stroke="#fff" stroke-width="1.7" stroke-linecap="round"/>
<path d="M5 2.8 Q8 2.2 10.6 3.6 Q13.4 5.6 17.6 4.8 Q17 8.8 14 10 Q11.6 10.8 10 9.6 Q7.6 8.6 5 9.4Z" fill="#fff" stroke="#3c4a5c" stroke-width=".9"/>
<path d="M10.8 4 Q10 7 10.4 9.6" fill="none" stroke="#b8c0cc" stroke-width=".8"/>
</svg><svg class="a" style="left:1138px;top:672px" width="20" height="18" viewBox="0 0 20 18">
<path d="M1.6 5.8 L3.8 5.8 L8.2 1.6 L8.2 16.2 L3.8 12 L1.6 12Z" fill="#fff" stroke="#3c4a5c" stroke-width="1"/>
<path d="M3.8 5.8 L3.8 12" stroke="#aab4c2" stroke-width=".8"/>
<circle cx="10" cy="8.9" r="1" fill="#e8ecf2"/>
<path d="M11.6 5.4 Q13.8 8.9 11.6 12.4" fill="none" stroke="#fff" stroke-width="1.3"/>
<path d="M13.8 3.2 Q17.6 8.9 13.8 14.6" fill="none" stroke="#fff" stroke-width="1.4"/>
</svg><svg class="a" style="left:1162px;top:672px" width="20" height="18" viewBox="0 0 20 18">
<defs><linearGradient id="nm" x1="0" y1="0" x2="1" y2="1"><stop offset="0" stop-color="#74849a"/><stop offset="1" stop-color="#46566a"/></linearGradient></defs>
<rect x="6.3" y="3.5" width="10.4" height="10" fill="url(#nm)" stroke="#fff" stroke-width="1.4"/>
<path d="M7.4 16.2 L15.8 16.2" stroke="#fff" stroke-width="1.5"/><path d="M11.6 13.8 L11.6 16" stroke="#fff" stroke-width="1.6"/>
<path d="M2.2 1.6 V5.8 Q2.2 8.4 4.1 8.4 Q6 8.4 6 5.8 V1.6 M4.1 8.4 V16.3 H7.6" fill="none" stroke="#3c4a5c" stroke-width="2.6"/>
<path d="M2.2 1.6 V5.8 Q2.2 8.4 4.1 8.4 Q6 8.4 6 5.8 V1.6 M4.1 8.4 V16.3 H7.6" fill="none" stroke="#fff" stroke-width="1.3"/>
</svg><span class="t" style="left:1200.50px;top:664.64px;font-size:12px;line-height:16px;color:#fff;letter-spacing:-0.243px;">3:56 PM</span><span class="t" style="left:1198.50px;top:681.64px;font-size:12px;line-height:16px;color:#fff;letter-spacing:-0.040px;">2/2/2015</span><div class="a" style="left:1257px;top:661px;width:15px;height:39px;border-left:1px solid #56667c;background:linear-gradient(160deg,#a0b0c4 0,#7a8ba2 40%,#62738a 60%,#8192aa 100%);box-shadow:inset 0 0 0 1px rgba(235,242,250,.5)"></div>
</div></div>
<svg class="a" style="left:1266px;top:706px" width="11" height="11" viewBox="0 0 11 11"><rect x="9" y="1" width="1" height="1" fill="#b4b4b4"/><rect x="9" y="3" width="1" height="1" fill="#b4b4b4"/><rect x="7" y="3" width="1" height="1" fill="#b4b4b4"/><rect x="9" y="5" width="1" height="1" fill="#b4b4b4"/><rect x="7" y="5" width="1" height="1" fill="#b4b4b4"/><rect x="5" y="5" width="1" height="1" fill="#b4b4b4"/><rect x="9" y="7" width="1" height="1" fill="#b4b4b4"/><rect x="7" y="7" width="1" height="1" fill="#b4b4b4"/><rect x="5" y="7" width="1" height="1" fill="#b4b4b4"/><rect x="3" y="7" width="1" height="1" fill="#b4b4b4"/><rect x="9" y="9" width="1" height="1" fill="#b4b4b4"/><rect x="7" y="9" width="1" height="1" fill="#b4b4b4"/><rect x="5" y="9" width="1" height="1" fill="#b4b4b4"/><rect x="3" y="9" width="1" height="1" fill="#b4b4b4"/><rect x="1" y="9" width="1" height="1" fill="#b4b4b4"/></svg>
</body>
</html>
